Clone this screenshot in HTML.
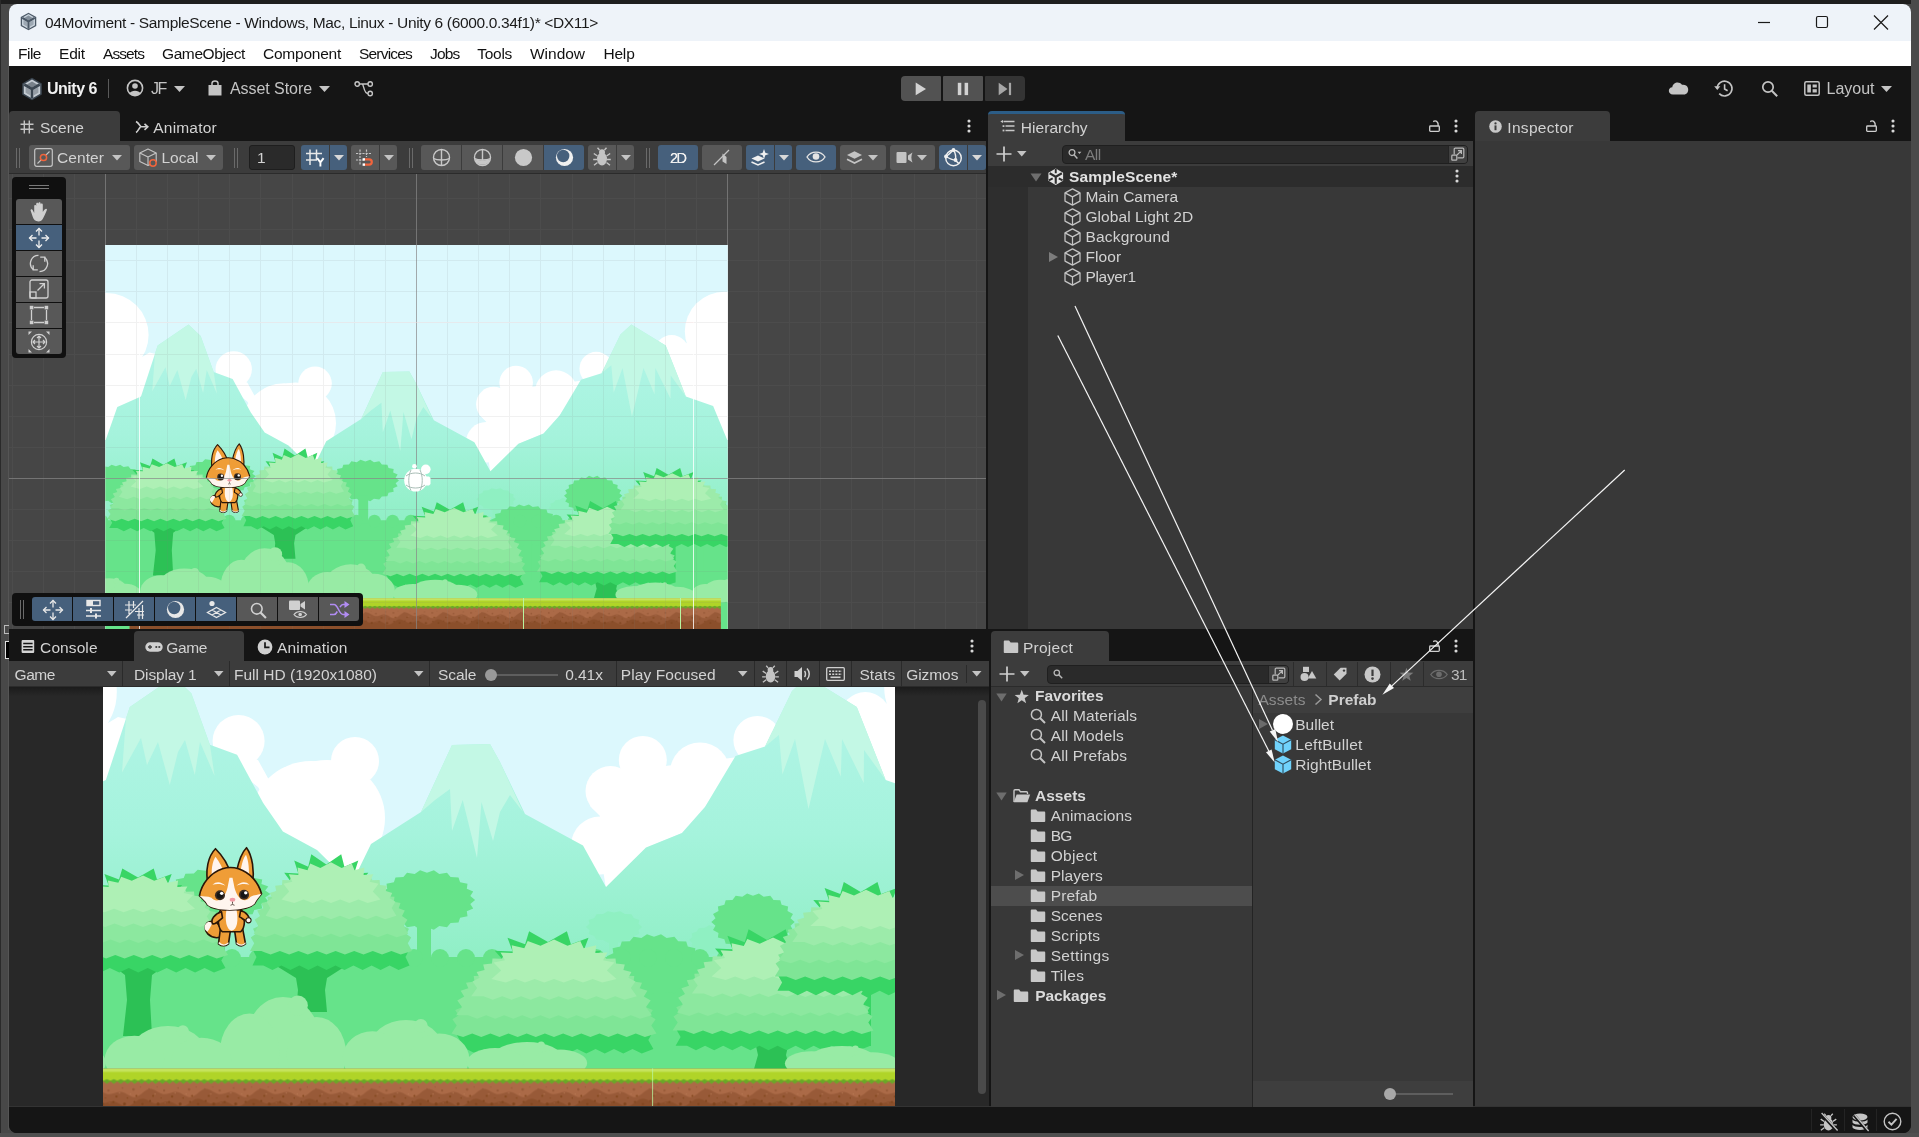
<!DOCTYPE html>
<html><head><meta charset="utf-8"><title>04Moviment - SampleScene - Unity 6</title>
<style>
html,body{margin:0;padding:0;background:#484848;overflow:hidden}
body{width:1919px;height:1137px;position:relative;font-family:"Liberation Sans",sans-serif;}
div,span.t,svg{position:absolute;box-sizing:border-box}
span.t{white-space:pre;}
svg{overflow:visible}
</style></head><body>
<div style="left:0px;top:0px;width:1919px;height:4px;background:#1e1e1e;"></div>
<div style="left:0px;top:0px;width:1px;height:1137px;background:#2a2a2a;"></div>
<div style="left:8px;top:40px;width:1px;height:1090px;background:#555;"></div>
<div style="left:4px;top:625px;width:5px;height:9px;border:1px solid #bbb;border-right:none;"></div>
<div style="left:5px;top:641px;width:5px;height:18px;background:#000;border:1px solid #e0e0e0;border-right:none;"></div>
<div style="left:1911px;top:66px;width:8px;height:12px;background:#2e2e2e;"></div>
<div style="left:1911px;top:203px;width:8px;height:18px;background:#2e2e2e;"></div>
<div style="left:1911px;top:335px;width:8px;height:18px;background:#2e2e2e;"></div>
<div style="left:1911px;top:0px;width:8px;height:1137px;background:#4a4a4a;"></div>
<div style="left:0px;top:1133px;width:1919px;height:4px;background:#4f4f4f;"></div>
<div id="win" style="left:9px;top:4px;width:1902px;height:1129px;border-radius:8px;overflow:hidden;will-change:transform;background:#151515">
<div style="left:-9px;top:-4px;width:1919px;height:1137px">
<div style="left:9px;top:4px;width:1902px;height:37px;background:#eef3f9;"></div>
<div style="left:9px;top:41px;width:1902px;height:25px;background:#ffffff;"></div>
<div style="left:9px;top:66px;width:1902px;height:1067px;background:#151515;"></div>
<div style="left:9px;top:111px;width:111px;height:30px;background:#3c3c3c;border-radius:4px 4px 0 0;"></div>
<div style="left:9px;top:141px;width:977px;height:33px;background:#3c3c3c;"></div>
<div style="left:9px;top:174px;width:977px;height:455px;background:#464646;overflow:hidden"><div style="left:-9px;top:-174px;width:1919px;height:1137px">
<svg style="left:105.3px;top:245px;overflow:hidden" width="622.4" height="384" viewBox="54.4 563.1 890.7 549.5"><defs><linearGradient id="mg" gradientUnits="userSpaceOnUse" x1="0" y1="680" x2="0" y2="990"><stop offset="0" stop-color="#b3f5e9"/><stop offset="0.5" stop-color="#a5f3dc"/><stop offset="1" stop-color="#8beec0"/></linearGradient><linearGradient id="dirt" gradientUnits="userSpaceOnUse" x1="0" y1="1084" x2="0" y2="1112"><stop offset="0" stop-color="#a9673f"/><stop offset="1" stop-color="#8a4f2c"/></linearGradient></defs><g id="art"><rect x="40" y="550" width="920" height="580" fill="#dcf8fd"/><g fill="#fff"><circle cx="56.8" cy="691.9" r="60"/><polygon points="54.0,700.0 108.0,723.0 118.0,717.0 127.0,719.0 130.0,730.0 130.0,845.0 54.0,845.0"/><circle cx="238.6" cy="741" r="26"/><circle cx="327" cy="818" r="58"/><circle cx="355" cy="761" r="24"/><polygon points="214.0,752.0 258.0,760.0 269.0,780.0 292.0,840.0 258.0,787.0"/><circle cx="311" cy="822" r="61"/><polygon points="275.0,818.0 379.0,818.0 379.0,850.0 353.0,887.0 350.0,887.0 317.0,850.0 283.0,833.0"/><circle cx="642.8" cy="760" r="24"/><circle cx="610.5" cy="791" r="25"/><circle cx="700" cy="772.5" r="30"/><circle cx="600" cy="845.5" r="29"/><polygon points="590.0,806.0 612.0,772.0 700.0,762.0 738.0,757.0 705.0,807.0 682.0,833.0 646.0,848.0 606.0,889.0 600.0,850.0 600.0,816.0"/><circle cx="757.4" cy="740" r="24"/><circle cx="941.2" cy="686.9" r="57"/><circle cx="865.3" cy="717" r="25"/><polygon points="862.0,705.0 948.0,700.0 948.0,845.0 862.0,845.0"/></g><polygon fill="url(#mg)" points="55.4,842.1 72.0,794.9 105.9,780.0 129.8,707.0 173.9,676.7 191.3,693.3 209.9,744.8 237.1,754.8 262.9,802.6 282.9,831.5 317.0,850.0 351.5,884.0 371.0,844.0 421.0,812.0 452.0,745.0 490.0,744.0 500.0,762.0 525.0,814.0 583.0,845.5 606.0,887.0 646.0,847.6 682.0,833.0 705.0,807.0 735.5,756.0 765.0,746.5 792.0,691.0 807.7,676.7 856.8,707.0 885.7,780.0 924.7,793.5 944.9,842.1 960.0,842.0 960.0,1000.0 40.0,1000.0 40.0,842.0"/><polygon fill="#c3f8e5" points="129.8,707.0 173.9,676.7 191.3,693.3 210.0,745.0 214.6,776.0 200.0,742.0 194.8,775.0 185.0,740.0 178.0,752.0 169.8,785.0 158.0,742.0 147.0,765.0 141.0,738.0 122.0,772.5 126.0,718.0"/><polygon fill="#c3f8e5" points="421.0,812.0 452.0,745.0 490.0,744.0 500.0,762.0 523.0,812.0 510.0,795.0 500.0,812.0 493.0,841.0 481.5,802.0 477.0,858.0 462.7,800.0 452.0,831.0 450.0,789.0 435.0,800.0"/><polygon fill="#c3f8e5" points="765.0,746.5 792.0,691.0 807.7,676.7 856.8,707.0 885.7,780.0 864.0,750.0 863.7,783.0 842.0,739.0 840.8,776.7 825.0,739.0 808.5,809.0 795.0,739.0 782.4,774.6 779.0,735.0"/><g fill="#8ff0c2"><polygon points="642.1,927.0 638.5,930.2 639.3,934.0 633.7,936.1 631.5,939.7 624.9,940.1 620.2,942.8 614.0,941.5 607.8,942.8 603.1,940.1 596.5,939.7 594.3,936.1 588.7,934.0 589.5,930.2 585.9,927.0 589.5,923.8 588.7,920.0 594.3,917.9 596.5,914.3 603.1,913.9 607.8,911.2 614.0,912.5 620.2,911.2 624.9,913.9 631.5,914.3 633.7,917.9 639.3,920.0 638.5,923.8"/><rect x="609" y="935" width="9" height="40"/><polygon points="740.9,940.0 737.6,943.0 738.4,946.6 733.2,948.4 731.2,951.8 725.1,952.2 720.8,954.7 715.0,953.6 709.2,954.7 704.9,952.2 698.8,951.8 696.8,948.4 691.6,946.6 692.4,943.0 689.1,940.0 692.4,937.0 691.6,933.4 696.8,931.6 698.8,928.2 704.9,927.8 709.2,925.3 715.0,926.4 720.8,925.3 725.1,927.8 731.2,928.2 733.2,931.6 738.4,933.4 737.6,937.0"/></g><g fill="#66e38a"><rect x="40" y="957" width="920" height="160"/><polygon points="270.4,894.0 265.2,897.5 268.3,901.5 261.4,904.1 262.2,908.5 254.3,909.9 252.6,914.2 244.2,914.4 240.3,918.3 232.1,917.3 226.3,920.5 219.0,918.3 211.7,920.5 205.9,917.3 197.7,918.3 193.8,914.4 185.4,914.2 183.7,909.9 175.8,908.5 176.6,904.1 169.7,901.5 172.8,897.5 167.6,894.0 172.8,890.5 169.7,886.5 176.6,883.9 175.8,879.5 183.7,878.1 185.4,873.8 193.8,873.6 197.7,869.7 205.9,870.7 211.7,867.5 219.0,869.7 226.3,867.5 232.1,870.7 240.3,869.7 244.2,873.6 252.6,873.8 254.3,878.1 262.2,879.5 261.4,883.9 268.3,886.5 265.2,890.5"/><polygon points="475.1,900.0 470.3,903.9 473.2,908.4 466.8,911.3 467.5,916.2 460.1,917.8 458.5,922.6 450.6,922.9 447.0,927.3 439.3,926.1 433.9,929.7 427.0,927.2 420.1,929.7 414.7,926.1 407.0,927.3 403.4,922.9 395.5,922.6 393.9,917.8 386.5,916.2 387.2,911.3 380.8,908.4 383.7,903.9 378.9,900.0 383.7,896.1 380.8,891.6 387.2,888.7 386.5,883.8 393.9,882.2 395.5,877.4 403.4,877.1 407.0,872.7 414.7,873.9 420.1,870.3 427.0,872.8 433.9,870.3 439.3,873.9 447.0,872.7 450.6,877.1 458.5,877.4 460.1,882.2 467.5,883.8 466.8,888.7 473.2,891.6 470.3,896.1"/><polygon points="703.2,965.0 698.3,969.0 701.2,973.7 694.7,976.7 695.4,981.8 687.8,983.5 686.2,988.5 678.2,988.7 674.4,993.2 666.6,992.0 661.0,995.7 654.0,993.2 647.0,995.7 641.4,992.0 633.6,993.2 629.8,988.7 621.8,988.5 620.2,983.5 612.6,981.8 613.3,976.7 606.8,973.7 609.7,969.0 604.8,965.0 609.7,961.0 606.8,956.3 613.3,953.3 612.6,948.2 620.2,946.5 621.8,941.5 629.8,941.3 633.6,936.8 641.4,938.0 647.0,934.3 654.0,936.8 661.0,934.3 666.6,938.0 674.4,936.8 678.2,941.3 686.2,941.5 687.8,946.5 695.4,948.2 694.7,953.3 701.2,956.3 698.3,961.0"/><polygon points="794.7,922.0 790.5,925.7 793.0,930.1 787.5,932.9 788.1,937.6 781.6,939.2 780.3,943.8 773.5,944.1 770.3,948.3 763.7,947.2 758.9,950.6 753.0,948.2 747.1,950.6 742.3,947.2 735.7,948.3 732.5,944.1 725.7,943.8 724.4,939.2 717.9,937.6 718.5,932.9 713.0,930.1 715.5,925.7 711.3,922.0 715.5,918.3 713.0,913.9 718.5,911.1 717.9,906.4 724.4,904.8 725.7,900.2 732.5,899.9 735.7,895.7 742.3,896.8 747.1,893.4 753.0,895.8 758.9,893.4 763.7,896.8 770.3,895.7 773.5,899.9 780.3,900.2 781.6,904.8 788.1,906.4 787.5,911.1 793.0,913.9 790.5,918.3"/><polygon points="112.8,905.0 108.5,908.6 111.1,912.8 105.4,915.5 106.0,920.0 99.4,921.5 98.0,926.0 91.0,926.3 87.8,930.3 81.0,929.2 76.1,932.5 70.0,930.3 63.9,932.5 59.0,929.2 52.2,930.3 49.0,926.3 42.0,926.0 40.6,921.5 34.0,920.0 34.6,915.5 28.9,912.8 31.5,908.6 27.2,905.0 31.5,901.4 28.9,897.2 34.6,894.5 34.0,890.0 40.6,888.5 42.0,884.0 49.0,883.7 52.2,879.7 59.0,880.8 63.9,877.5 70.0,879.7 76.1,877.5 81.0,880.8 87.8,879.7 91.0,883.7 98.0,884.0 99.4,888.5 106.0,890.0 105.4,894.5 111.1,897.2 108.5,901.4"/><polygon points="965.7,960.0 961.6,963.9 964.0,968.4 958.6,971.3 959.2,976.2 952.9,977.8 951.6,982.6 945.0,982.9 941.9,987.3 935.4,986.1 930.8,989.7 925.0,987.2 919.2,989.7 914.6,986.1 908.1,987.3 905.0,982.9 898.4,982.6 897.1,977.8 890.8,976.2 891.4,971.3 886.0,968.4 888.4,963.9 884.3,960.0 888.4,956.1 886.0,951.6 891.4,948.7 890.8,943.8 897.1,942.2 898.4,937.4 905.0,937.1 908.1,932.7 914.6,933.9 919.2,930.3 925.0,932.8 930.8,930.3 935.4,933.9 941.9,932.7 945.0,937.1 951.6,937.4 952.9,942.2 959.2,943.8 958.6,948.7 964.0,951.6 961.6,956.1"/><rect x="417" y="922" width="14" height="40"/><rect x="654" y="985" width="11" height="60"/><rect x="747" y="940" width="12" height="30"/><rect x="213" y="910" width="12" height="50"/><circle cx="50" cy="958" r="9"/><circle cx="76" cy="958" r="9"/><circle cx="102" cy="958" r="9"/><circle cx="128" cy="958" r="9"/><circle cx="154" cy="958" r="9"/><circle cx="180" cy="958" r="9"/><circle cx="206" cy="958" r="9"/><circle cx="232" cy="958" r="9"/><circle cx="258" cy="958" r="9"/><circle cx="284" cy="958" r="9"/><circle cx="310" cy="958" r="9"/><circle cx="336" cy="958" r="9"/><circle cx="362" cy="958" r="9"/><circle cx="388" cy="958" r="9"/><circle cx="414" cy="958" r="9"/><circle cx="440" cy="958" r="9"/><circle cx="466" cy="958" r="9"/><circle cx="492" cy="958" r="9"/><circle cx="518" cy="958" r="9"/><circle cx="544" cy="958" r="9"/><circle cx="570" cy="958" r="9"/><circle cx="596" cy="958" r="9"/><circle cx="622" cy="958" r="9"/><circle cx="648" cy="958" r="9"/><circle cx="674" cy="958" r="9"/><circle cx="700" cy="958" r="9"/><circle cx="726" cy="958" r="9"/><circle cx="752" cy="958" r="9"/><circle cx="778" cy="958" r="9"/><circle cx="804" cy="958" r="9"/><circle cx="830" cy="958" r="9"/><circle cx="856" cy="958" r="9"/><circle cx="882" cy="958" r="9"/><circle cx="908" cy="958" r="9"/><circle cx="934" cy="958" r="9"/></g><g fill="#2cc155"><polygon points="108.0,962.0 170.0,962.0 152.0,975.0 150.0,1000.0 152.0,1036.0 123.0,1036.0 127.0,1000.0 125.0,975.0"/><polygon points="270.0,962.0 352.0,962.0 327.0,978.0 325.0,990.0 327.0,1012.0 296.0,1012.0 298.0,990.0 296.0,978.0"/><polygon points="720.0,1036.0 824.0,1036.0 788.0,1046.0 786.0,1055.0 790.0,1069.0 754.0,1069.0 758.0,1055.0 756.0,1046.0"/><polygon points="520.0,1040.0 600.0,1040.0 572.0,1050.0 571.0,1060.0 553.0,1060.0 554.0,1050.0"/></g><rect x="850" y="960" width="26" height="86" fill="#38d565"/><rect x="871" y="982" width="40" height="87" fill="#66e38a" rx="8"/><polygon fill="#38d565" points="90.3,905.0 103.4,895.9 93.8,884.9 108.6,885.6 104.4,874.0 119.0,879.5 122.3,868.5 138.0,877.5 153.7,868.5 157.0,879.5 171.7,874.0 167.4,885.6 182.2,884.9 172.6,895.9 185.7,904.9 170.3,905.0 161.1,905.0 151.9,905.0 142.6,905.0 133.4,905.0 124.2,905.0 115.0,905.0 105.7,905.0"/><polygon fill="#38d565" points="60.5,968.1 64.7,960.4 61.4,954.7 66.5,951.0 64.2,946.0 70.0,943.5 68.8,938.8 75.3,937.2 75.2,932.8 82.3,932.1 83.5,927.9 91.0,927.9 93.6,924.1 101.5,924.8 105.7,921.4 114.1,922.7 120.4,919.7 130.1,921.7 143.0,919.2 155.9,921.7 165.6,919.7 171.9,922.7 180.3,921.4 184.5,924.8 192.4,924.1 195.0,927.9 202.5,927.9 203.7,932.1 210.8,932.8 210.7,937.2 217.2,938.8 216.0,943.5 221.8,946.0 219.5,951.0 224.6,954.7 221.3,960.4 225.5,968.1 214.0,972.6 204.6,968.1 195.1,972.6 185.6,968.1 176.2,972.6 166.7,968.1 157.2,972.6 147.7,968.1 138.3,972.6 128.8,968.1 119.3,972.6 109.8,968.1 100.4,972.6 90.9,968.1 81.4,972.6 72.0,968.1"/><polygon fill="#7fe596" points="57.9,955.0 62.3,948.2 58.7,943.0 63.7,939.7 61.0,935.1 66.7,932.9 64.9,928.6 71.1,927.1 70.3,923.0 76.9,922.3 77.2,918.4 84.2,918.2 85.6,914.5 92.9,915.0 95.6,911.5 103.2,912.5 107.3,909.4 115.4,910.9 121.4,908.1 130.7,910.1 143.0,907.6 155.3,910.1 164.6,908.1 170.6,910.9 178.7,909.4 182.8,912.5 190.4,911.5 193.1,915.0 200.4,914.5 201.8,918.2 208.8,918.4 209.1,922.3 215.7,923.0 214.9,927.1 221.1,928.6 219.3,932.9 225.0,935.1 222.3,939.7 227.3,943.0 223.7,948.2 228.1,955.0 216.8,958.5 207.6,955.0 198.3,958.5 189.1,955.0 179.9,958.5 170.7,955.0 161.4,958.5 152.2,955.0 143.0,958.5 133.8,955.0 124.6,958.5 115.3,955.0 106.1,958.5 96.9,955.0 87.7,958.5 78.4,955.0 69.2,958.5"/><polygon fill="#8ce89f" points="61.8,939.6 66.7,932.5 62.7,927.0 68.5,923.7 65.4,918.8 71.9,916.7 70.0,912.1 77.0,910.9 76.3,906.4 83.8,906.1 84.4,901.8 92.3,902.2 94.4,898.2 102.6,899.3 106.3,895.7 114.9,897.4 120.8,894.1 130.4,896.4 143.0,893.6 155.6,896.4 165.2,894.1 171.1,897.4 179.7,895.7 183.4,899.3 191.6,898.2 193.7,902.2 201.6,901.8 202.2,906.1 209.7,906.4 209.0,910.9 216.0,912.1 214.1,916.7 220.6,918.8 217.5,923.7 223.3,927.0 219.3,932.5 224.2,939.6 212.6,943.1 203.3,939.6 194.0,943.1 184.7,939.6 175.5,943.1 166.2,939.6 156.9,943.1 147.6,939.6 138.4,943.1 129.1,939.6 119.8,943.1 110.5,939.6 101.3,943.1 92.0,939.6 82.7,943.1 73.4,939.6"/><polygon fill="#9cebaa" points="74.3,923.4 79.2,916.4 75.4,911.0 81.3,907.8 78.7,903.0 85.4,901.2 84.3,896.5 91.6,895.8 92.0,891.4 99.8,891.7 101.9,887.6 110.1,888.7 114.2,885.0 123.0,886.9 130.1,883.7 143.0,886.3 155.9,883.7 163.0,886.9 171.8,885.0 175.9,888.7 184.1,887.6 186.2,891.7 194.0,891.4 194.4,895.8 201.7,896.5 200.6,901.2 207.3,903.0 204.7,907.8 210.6,911.0 206.8,916.4 211.7,923.4 199.9,926.9 190.4,923.4 180.9,926.9 171.5,923.4 162.0,926.9 152.5,923.4 143.0,926.9 133.5,923.4 124.0,926.9 114.5,923.4 105.1,926.9 95.6,923.4 86.1,926.9"/><polygon fill="#aef0b5" points="91.0,908.8 99.1,901.6 92.9,894.9 102.3,893.0 98.6,886.4 108.7,886.9 107.9,880.4 118.3,882.8 121.2,876.7 131.8,880.7 143.0,875.5 154.2,880.7 164.8,876.7 167.7,882.8 178.1,880.4 177.3,886.9 187.4,886.4 183.7,893.0 193.1,894.9 186.9,901.6 195.0,908.8 181.5,912.3 171.9,908.8 162.3,912.3 152.6,908.8 143.0,912.3 133.4,908.8 123.7,912.3 114.1,908.8 104.5,912.3"/><polygon fill="#38d565" points="280.8,895.1 293.3,885.0 284.2,872.7 298.3,873.5 294.2,860.5 308.2,866.7 311.3,854.3 326.3,864.4 341.2,854.3 344.4,866.7 358.3,860.5 354.2,873.5 368.3,872.7 359.2,885.0 371.7,895.1 355.9,895.1 346.0,895.1 336.1,895.1 326.3,895.1 316.4,895.1 306.5,895.1 296.6,895.1"/><polygon fill="#38d565" points="252.5,965.6 256.5,957.1 253.3,950.7 258.2,946.5 256.0,940.9 261.5,938.1 260.4,932.9 266.5,931.2 266.5,926.2 273.2,925.4 274.4,920.7 281.5,920.8 284.0,916.5 291.5,917.3 295.5,913.4 303.5,914.9 309.5,911.6 318.7,913.8 331.0,911.0 343.3,913.8 352.5,911.6 358.5,914.9 366.5,913.4 370.5,917.3 378.0,916.5 380.5,920.8 387.6,920.7 388.8,925.4 395.5,926.2 395.5,931.2 401.6,932.9 400.5,938.1 406.0,940.9 403.8,946.5 408.7,950.7 405.5,957.1 409.5,965.6 398.6,970.1 389.6,965.6 380.6,970.1 371.6,965.6 362.6,970.1 353.5,965.6 344.5,970.1 335.5,965.6 326.5,970.1 317.5,965.6 308.5,970.1 299.4,965.6 290.4,970.1 281.4,965.6 272.4,970.1 263.4,965.6"/><polygon fill="#7fe596" points="250.0,951.0 254.2,943.3 250.8,937.6 255.6,933.9 253.0,928.8 258.4,926.3 256.7,921.5 262.5,919.9 261.8,915.3 268.1,914.4 268.3,910.1 275.0,909.9 276.4,905.8 283.4,906.3 285.9,902.4 293.2,903.6 297.0,900.0 304.8,901.7 310.5,898.6 319.3,900.8 331.0,898.1 342.7,900.8 351.5,898.6 357.2,901.7 365.0,900.0 368.8,903.6 376.1,902.4 378.6,906.3 385.6,905.8 387.0,909.9 393.7,910.1 393.9,914.4 400.2,915.3 399.5,919.9 405.3,921.5 403.6,926.3 409.0,928.8 406.4,933.9 411.2,937.6 407.8,943.3 412.0,951.0 400.7,954.5 391.4,951.0 382.1,954.5 372.8,951.0 363.5,954.5 354.2,951.0 344.9,954.5 335.6,951.0 326.4,954.5 317.1,951.0 307.8,954.5 298.5,951.0 289.2,954.5 279.9,951.0 270.6,954.5 261.3,951.0"/><polygon fill="#8ce89f" points="253.7,933.8 258.4,925.8 254.6,919.7 260.0,916.0 257.2,910.6 263.3,908.2 261.5,903.0 268.2,901.7 267.5,896.8 274.7,896.4 275.3,891.6 282.8,892.1 284.7,887.6 292.5,888.8 296.1,884.7 304.2,886.6 309.8,883.0 319.0,885.6 331.0,882.4 343.0,885.6 352.2,883.0 357.8,886.6 365.9,884.7 369.5,888.8 377.3,887.6 379.2,892.1 386.7,891.6 387.3,896.4 394.5,896.8 393.8,901.7 400.5,903.0 398.7,908.2 404.8,910.6 402.0,916.0 407.4,919.7 403.6,925.8 408.3,933.8 396.7,937.3 387.3,933.8 377.9,937.3 368.5,933.8 359.1,937.3 349.8,933.8 340.4,937.3 331.0,933.8 321.6,937.3 312.2,933.8 302.9,937.3 293.5,933.8 284.1,937.3 274.7,933.8 265.3,937.3"/><polygon fill="#9cebaa" points="265.6,915.7 270.3,907.9 266.6,901.8 272.2,898.3 269.8,892.9 276.2,890.9 275.1,885.7 282.0,884.9 282.4,880.0 289.8,880.3 291.8,875.7 299.7,876.9 303.6,872.9 311.9,874.9 318.7,871.4 331.0,874.2 343.3,871.4 350.1,874.9 358.4,872.9 362.3,876.9 370.2,875.7 372.2,880.3 379.6,880.0 380.0,884.9 386.9,885.7 385.8,890.9 392.2,892.9 389.8,898.3 395.4,901.8 391.7,907.9 396.4,915.7 385.2,919.2 376.1,915.7 367.1,919.2 358.1,915.7 349.1,919.2 340.0,915.7 331.0,919.2 322.0,915.7 312.9,919.2 303.9,915.7 294.9,919.2 285.9,915.7 276.8,919.2"/><polygon fill="#aef0b5" points="281.5,899.4 289.2,891.4 283.3,883.8 292.3,881.8 288.7,874.3 298.4,874.9 297.6,867.6 307.5,870.3 310.2,863.6 320.3,868.0 331.0,862.2 341.7,868.0 351.8,863.6 354.5,870.3 364.4,867.6 363.6,874.9 373.3,874.3 369.7,881.8 378.7,883.8 372.8,891.4 380.5,899.4 367.7,902.9 358.5,899.4 349.3,902.9 340.2,899.4 331.0,902.9 321.8,899.4 312.7,902.9 303.5,899.4 294.3,902.9"/><polygon fill="#38d565" points="490.5,974.4 506.3,963.7 494.8,950.7 512.6,951.4 507.5,937.7 525.1,944.3 529.1,931.2 548.0,941.9 566.9,931.2 570.9,944.3 588.5,937.7 583.4,951.4 601.2,950.7 589.7,963.7 605.5,974.3 588.9,974.4 579.8,974.4 570.7,974.4 561.6,974.4 552.5,974.4 543.5,974.4 534.4,974.4 525.3,974.4 516.2,974.4 507.1,974.4"/><polygon fill="#38d565" points="454.6,1049.0 459.7,1039.9 455.7,1033.1 461.8,1028.7 459.0,1022.8 466.1,1019.9 464.6,1014.3 472.4,1012.5 472.4,1007.3 480.8,1006.4 482.3,1001.5 491.3,1001.5 494.5,997.0 504.0,997.8 509.1,993.7 519.2,995.4 526.8,991.8 538.5,994.1 554.0,991.1 569.5,994.1 581.2,991.8 588.8,995.4 598.9,993.7 604.0,997.8 613.5,997.0 616.7,1001.5 625.7,1001.5 627.2,1006.4 635.6,1007.3 635.6,1012.5 643.4,1014.3 641.9,1019.9 649.0,1022.8 646.2,1028.7 652.3,1033.1 648.3,1039.9 653.4,1049.0 641.8,1053.5 632.5,1049.0 623.3,1053.5 614.0,1049.0 604.8,1053.5 595.6,1049.0 586.3,1053.5 577.1,1049.0 567.9,1053.5 558.6,1049.0 549.4,1053.5 540.1,1049.0 530.9,1053.5 521.7,1049.0 512.4,1053.5 503.2,1049.0 494.0,1053.5 484.7,1049.0 475.5,1053.5 466.2,1049.0"/><polygon fill="#7fe596" points="451.5,1033.5 456.7,1025.4 452.4,1019.3 458.5,1015.4 455.2,1010.0 462.0,1007.3 459.9,1002.3 467.3,1000.6 466.4,995.7 474.4,994.8 474.7,990.2 483.2,990.0 484.8,985.7 493.7,986.2 496.9,982.1 506.1,983.3 511.0,979.6 520.8,981.4 528.0,978.0 539.2,980.4 554.0,977.5 568.8,980.4 580.0,978.0 587.2,981.4 597.0,979.6 601.9,983.3 611.1,982.1 614.3,986.2 623.2,985.7 624.8,990.0 633.3,990.2 633.6,994.8 641.6,995.7 640.7,1000.6 648.1,1002.3 646.0,1007.3 652.8,1010.0 649.5,1015.4 655.6,1019.3 651.3,1025.4 656.5,1033.5 644.9,1037.0 635.8,1033.5 626.7,1037.0 617.6,1033.5 608.5,1037.0 599.5,1033.5 590.4,1037.0 581.3,1033.5 572.2,1037.0 563.1,1033.5 554.0,1037.0 544.9,1033.5 535.8,1037.0 526.7,1033.5 517.6,1037.0 508.5,1033.5 499.5,1037.0 490.4,1033.5 481.3,1037.0 472.2,1033.5 463.1,1037.0"/><polygon fill="#8ce89f" points="456.1,1015.3 462.1,1006.9 457.3,1000.4 464.2,996.5 460.6,990.7 468.3,988.2 466.0,982.8 474.5,981.4 473.7,976.1 482.7,975.7 483.4,970.7 492.9,971.1 495.4,966.4 505.3,967.7 509.8,963.4 520.1,965.4 527.2,961.5 538.9,964.2 554.0,960.9 569.1,964.2 580.8,961.5 587.9,965.4 598.2,963.4 602.7,967.7 612.6,966.4 615.1,971.1 624.6,970.7 625.3,975.7 634.3,976.1 633.5,981.4 642.0,982.8 639.7,988.2 647.4,990.7 643.8,996.5 650.7,1000.4 645.9,1006.9 651.9,1015.3 640.0,1018.8 630.9,1015.3 621.9,1018.8 612.8,1015.3 603.8,1018.8 594.7,1015.3 585.7,1018.8 576.6,1015.3 567.6,1018.8 558.5,1015.3 549.5,1018.8 540.4,1015.3 531.4,1018.8 522.3,1015.3 513.3,1018.8 504.2,1015.3 495.2,1018.8 486.1,1015.3 477.1,1018.8 468.0,1015.3"/><polygon fill="#9cebaa" points="471.2,996.2 477.1,987.9 472.5,981.5 479.6,977.8 476.6,972.0 484.6,969.9 483.2,964.4 492.0,963.6 492.5,958.4 501.9,958.7 504.4,953.9 514.3,955.1 519.3,950.8 529.9,953.0 538.4,949.3 554.0,952.3 569.6,949.3 578.1,953.0 588.7,950.8 593.7,955.1 603.6,953.9 606.1,958.7 615.5,958.4 616.0,963.6 624.8,964.4 623.4,969.9 631.4,972.0 628.4,977.8 635.5,981.5 630.9,987.9 636.8,996.2 624.6,999.7 615.2,996.2 605.8,999.7 596.4,996.2 586.9,999.7 577.5,996.2 568.1,999.7 558.7,996.2 549.3,999.7 539.9,996.2 530.5,999.7 521.1,996.2 511.6,999.7 502.2,996.2 492.8,999.7 483.4,996.2"/><polygon fill="#aef0b5" points="491.4,978.9 501.1,970.4 493.6,962.4 505.0,960.2 500.5,952.4 512.7,953.0 511.7,945.3 524.3,948.2 527.7,941.0 540.5,945.7 554.0,939.6 567.5,945.7 580.3,941.0 583.7,948.2 596.3,945.3 595.3,953.0 607.5,952.4 603.0,960.2 614.4,962.4 606.9,970.4 616.6,978.9 602.3,982.4 592.7,978.9 583.0,982.4 573.3,978.9 563.7,982.4 554.0,978.9 544.3,982.4 534.7,978.9 525.0,982.4 515.3,978.9 505.7,982.4"/><polygon fill="#38d565" points="710.8,972.0 726.2,961.4 715.0,948.6 732.4,949.3 727.4,935.8 744.7,942.3 748.6,929.3 767.1,939.9 785.7,929.3 789.6,942.3 806.8,935.8 801.8,949.3 819.3,948.6 808.0,961.4 823.5,972.0 806.3,972.0 796.5,972.0 786.7,972.0 776.9,972.0 767.1,972.0 757.3,972.0 747.5,972.0 737.7,972.0 727.9,972.0"/><polygon fill="#38d565" points="675.6,1045.8 680.6,1036.9 676.7,1030.1 682.7,1025.8 679.9,1019.9 686.8,1017.0 685.4,1011.6 693.0,1009.7 693.0,1004.6 701.3,1003.7 702.7,998.8 711.6,998.9 714.7,994.4 724.0,995.2 729.0,991.2 738.9,992.8 746.3,989.2 757.8,991.5 773.0,988.6 788.2,991.5 799.7,989.2 807.1,992.8 817.0,991.2 822.0,995.2 831.3,994.4 834.4,998.9 843.3,998.8 844.7,1003.7 853.0,1004.6 853.0,1009.7 860.6,1011.6 859.2,1017.0 866.1,1019.9 863.3,1025.8 869.3,1030.1 865.4,1036.9 870.4,1045.8 859.0,1050.3 850.0,1045.8 840.9,1050.3 831.8,1045.8 822.8,1050.3 813.7,1045.8 804.7,1050.3 795.6,1045.8 786.6,1050.3 777.5,1045.8 768.5,1050.3 759.4,1045.8 750.4,1050.3 741.3,1045.8 732.3,1050.3 723.2,1045.8 714.2,1050.3 705.1,1045.8 696.0,1050.3 687.0,1045.8"/><polygon fill="#7fe596" points="672.5,1030.5 677.7,1022.5 673.5,1016.5 679.4,1012.6 676.2,1007.3 682.9,1004.6 680.8,999.6 688.1,997.9 687.1,993.1 695.0,992.2 695.3,987.7 703.6,987.5 705.2,983.2 713.9,983.7 717.0,979.7 726.1,980.8 730.9,977.2 740.4,978.9 747.5,975.7 758.5,978.0 773.0,975.1 787.5,978.0 798.5,975.7 805.6,978.9 815.1,977.2 819.9,980.8 829.0,979.7 832.1,983.7 840.8,983.2 842.4,987.5 850.7,987.7 851.0,992.2 858.9,993.1 857.9,997.9 865.2,999.6 863.1,1004.6 869.8,1007.3 866.6,1012.6 872.5,1016.5 868.3,1022.5 873.5,1030.5 861.7,1034.0 852.3,1030.5 843.0,1034.0 833.7,1030.5 824.3,1034.0 815.0,1030.5 805.7,1034.0 796.3,1030.5 787.0,1034.0 777.7,1030.5 768.3,1034.0 759.0,1030.5 749.7,1034.0 740.3,1030.5 731.0,1034.0 721.7,1030.5 712.3,1034.0 703.0,1030.5 693.7,1034.0 684.3,1030.5"/><polygon fill="#8ce89f" points="677.1,1012.5 682.9,1004.2 678.2,997.8 685.0,993.9 681.4,988.2 689.0,985.7 686.8,980.3 695.1,978.9 694.3,973.7 703.1,973.3 703.9,968.4 713.1,968.8 715.6,964.2 725.3,965.4 729.7,961.2 739.8,963.1 746.7,959.3 758.2,962.0 773.0,958.7 787.8,962.0 799.3,959.3 806.2,963.1 816.3,961.2 820.7,965.4 830.4,964.2 832.9,968.8 842.1,968.4 842.9,973.3 851.7,973.7 850.9,978.9 859.2,980.3 857.0,985.7 864.6,988.2 861.0,993.9 867.8,997.8 863.1,1004.2 868.9,1012.5 856.8,1016.0 847.5,1012.5 838.2,1016.0 828.9,1012.5 819.6,1016.0 810.2,1012.5 800.9,1016.0 791.6,1012.5 782.3,1016.0 773.0,1012.5 763.7,1016.0 754.4,1012.5 745.1,1016.0 735.8,1012.5 726.5,1016.0 717.1,1012.5 707.8,1016.0 698.5,1012.5 689.2,1016.0"/><polygon fill="#9cebaa" points="691.9,993.6 697.7,985.4 693.2,979.0 700.1,975.4 697.1,969.7 705.0,967.6 703.6,962.2 712.3,961.3 712.7,956.2 721.9,956.5 724.4,951.7 734.1,953.0 739.0,948.7 749.3,950.9 757.7,947.2 773.0,950.2 788.3,947.2 796.7,950.9 807.0,948.7 811.9,953.0 821.6,951.7 824.1,956.5 833.3,956.2 833.7,961.3 842.4,962.2 841.0,967.6 848.9,969.7 845.9,975.4 852.8,979.0 848.3,985.4 854.1,993.6 842.2,997.1 833.0,993.6 823.7,997.1 814.5,993.6 805.3,997.1 796.1,993.6 786.8,997.1 777.6,993.6 768.4,997.1 759.2,993.6 749.9,997.1 740.7,993.6 731.5,997.1 722.3,993.6 713.0,997.1 703.8,993.6"/><polygon fill="#aef0b5" points="711.6,976.5 721.2,968.1 713.9,960.2 725.0,958.0 720.5,950.3 732.5,950.9 731.6,943.3 743.8,946.1 747.3,939.0 759.7,943.7 773.0,937.6 786.3,943.7 798.7,939.0 802.2,946.1 814.4,943.3 813.5,950.9 825.5,950.3 821.0,958.0 832.1,960.2 824.8,968.1 834.4,976.5 820.4,980.0 810.9,976.5 801.4,980.0 791.9,976.5 782.5,980.0 773.0,976.5 763.5,980.0 754.1,976.5 744.6,980.0 735.1,976.5 725.6,980.0"/><polygon fill="#38d565" points="809.5,921.9 823.5,912.0 813.3,900.0 829.1,900.8 824.6,888.1 840.3,894.1 843.8,882.1 860.7,891.9 877.5,882.1 881.1,894.1 896.7,888.1 892.2,900.8 908.0,900.0 897.8,912.0 911.8,921.9 895.3,921.9 885.4,921.9 875.5,921.9 865.6,921.9 855.7,921.9 845.8,921.9 835.9,921.9 826.0,921.9"/><polygon fill="#38d565" points="777.5,990.8 782.1,982.4 778.5,976.2 784.0,972.1 781.5,966.6 787.7,963.9 786.4,958.8 793.4,957.1 793.4,952.3 800.9,951.5 802.2,947.0 810.2,947.0 813.0,942.8 821.5,943.6 826.0,939.8 835.0,941.3 841.8,938.0 852.2,940.1 866.0,937.4 879.8,940.1 890.2,938.0 897.0,941.3 906.0,939.8 910.5,943.6 919.0,942.8 921.8,947.0 929.8,947.0 931.1,951.5 938.6,952.3 938.6,957.1 945.6,958.8 944.3,963.9 950.5,966.6 948.0,972.1 953.5,976.2 949.9,982.4 954.5,990.8 943.2,995.3 934.2,990.8 925.1,995.3 916.0,990.8 906.9,995.3 897.8,990.8 888.7,995.3 879.6,990.8 870.5,995.3 861.5,990.8 852.4,995.3 843.3,990.8 834.2,995.3 825.1,990.8 816.0,995.3 806.9,990.8 797.8,995.3 788.8,990.8"/><polygon fill="#7fe596" points="774.8,976.5 779.4,969.0 775.6,963.4 781.0,959.8 778.1,954.8 784.2,952.4 782.2,947.7 788.9,946.1 788.0,941.6 795.1,940.8 795.4,936.5 803.0,936.4 804.4,932.3 812.3,932.8 815.1,929.1 823.4,930.2 827.7,926.7 836.4,928.4 842.9,925.3 852.8,927.5 866.0,924.8 879.2,927.5 889.1,925.3 895.6,928.4 904.3,926.7 908.6,930.2 916.9,929.1 919.7,932.8 927.6,932.3 929.0,936.4 936.6,936.5 936.9,940.8 944.0,941.6 943.1,946.1 949.8,947.7 947.8,952.4 953.9,954.8 951.0,959.8 956.4,963.4 952.6,969.0 957.2,976.5 945.6,980.0 936.3,976.5 926.9,980.0 917.5,976.5 908.2,980.0 898.8,976.5 889.4,980.0 880.1,976.5 870.7,980.0 861.3,976.5 851.9,980.0 842.6,976.5 833.2,980.0 823.8,976.5 814.5,980.0 805.1,976.5 795.7,980.0 786.4,976.5"/><polygon fill="#8ce89f" points="778.9,959.7 784.2,951.9 779.9,946.0 786.1,942.3 782.8,937.0 789.7,934.7 787.7,929.7 795.2,928.4 794.5,923.5 802.5,923.1 803.2,918.5 811.6,918.9 813.9,914.6 822.6,915.8 826.6,911.8 835.8,913.6 842.2,910.1 852.5,912.6 866.0,909.5 879.5,912.6 889.8,910.1 896.2,913.6 905.4,911.8 909.4,915.8 918.1,914.6 920.4,918.9 928.8,918.5 929.5,923.1 937.5,923.5 936.8,928.4 944.3,929.7 942.3,934.7 949.2,937.0 945.9,942.3 952.1,946.0 947.8,951.9 953.1,959.7 941.2,963.2 931.8,959.7 922.4,963.2 913.0,959.7 903.6,963.2 894.2,959.7 884.8,963.2 875.4,959.7 866.0,963.2 856.6,959.7 847.2,963.2 837.8,959.7 828.4,963.2 819.0,959.7 809.6,963.2 800.2,959.7 790.8,963.2"/><polygon fill="#9cebaa" points="792.3,942.1 797.6,934.4 793.5,928.5 799.8,925.1 797.1,919.7 804.2,917.8 803.0,912.7 810.8,912.0 811.3,907.2 819.6,907.4 821.9,903.0 830.7,904.2 835.1,900.2 844.5,902.2 852.1,898.8 866.0,901.5 879.9,898.8 887.5,902.2 896.9,900.2 901.3,904.2 910.1,903.0 912.4,907.4 920.7,907.2 921.2,912.0 929.0,912.7 927.8,917.8 934.9,919.7 932.2,925.1 938.5,928.5 934.4,934.4 939.7,942.1 927.7,945.6 918.2,942.1 908.7,945.6 899.2,942.1 889.7,945.6 880.2,942.1 870.7,945.6 861.3,942.1 851.8,945.6 842.3,942.1 832.8,945.6 823.3,942.1 813.8,945.6 804.3,942.1"/><polygon fill="#aef0b5" points="810.3,926.1 818.9,918.3 812.3,910.9 822.4,908.9 818.3,901.6 829.3,902.2 828.4,895.1 839.5,897.7 842.6,891.1 854.0,895.5 866.0,889.8 878.0,895.5 889.4,891.1 892.5,897.7 903.6,895.1 902.7,902.2 913.7,901.6 909.6,908.9 919.7,910.9 913.1,918.3 921.7,926.1 908.2,929.6 898.8,926.1 889.5,929.6 880.1,926.1 870.7,929.6 861.3,926.1 851.9,929.6 842.5,926.1 833.2,929.6 823.8,926.1"/><g fill="#98eba5"><ellipse cx="283" cy="1041.268" rx="37.199999999999996" ry="44.26800000000006"/><ellipse cx="249.51999999999998" cy="1052.692" rx="29.759999999999998" ry="39.27000000000005"/><ellipse cx="316.48" cy="1054.1200000000001" rx="29.759999999999998" ry="37.12800000000005"/><circle cx="297.88" cy="1005.568" r="9.996000000000013"/></g><g fill="#98eba5"><ellipse cx="168" cy="1052.288" rx="37.199999999999996" ry="26.288000000000057"/><ellipse cx="134.51999999999998" cy="1059.0720000000001" rx="29.759999999999998" ry="23.320000000000054"/><ellipse cx="201.48000000000002" cy="1059.92" rx="29.759999999999998" ry="22.048000000000048"/><circle cx="182.88" cy="1031.088" r="5.936000000000013"/></g><g fill="#98eba5"><ellipse cx="406" cy="1050.008" rx="37.199999999999996" ry="30.008000000000056"/><ellipse cx="372.52" cy="1057.7520000000002" rx="29.759999999999998" ry="26.62000000000005"/><ellipse cx="439.48" cy="1058.72" rx="29.759999999999998" ry="25.16800000000005"/><circle cx="420.88" cy="1025.808" r="6.776000000000013"/></g><g fill="#98eba5"><ellipse cx="527" cy="1058.3680000000002" rx="35.4" ry="16.368000000000055"/><ellipse cx="495.14" cy="1062.592" rx="28.32" ry="14.520000000000051"/><ellipse cx="558.86" cy="1063.1200000000001" rx="28.32" ry="13.728000000000048"/><circle cx="541.16" cy="1045.1680000000001" r="3.696000000000013"/></g><g fill="#98eba5"><ellipse cx="842" cy="1059.8880000000001" rx="33.6" ry="13.888000000000057"/><ellipse cx="811.76" cy="1063.472" rx="26.88" ry="12.320000000000052"/><ellipse cx="872.24" cy="1063.92" rx="26.88" ry="11.648000000000048"/><circle cx="855.44" cy="1048.688" r="3.136000000000013"/></g><g fill="#98eba5"><ellipse cx="60" cy="1057.608" rx="27.0" ry="17.608000000000057"/><ellipse cx="35.7" cy="1062.152" rx="21.599999999999998" ry="15.62000000000005"/><ellipse cx="84.3" cy="1062.72" rx="21.599999999999998" ry="14.768000000000049"/><circle cx="70.8" cy="1043.408" r="3.9760000000000133"/></g><g fill="#98eba5"><ellipse cx="935" cy="1058.3680000000002" rx="24.0" ry="16.368000000000055"/><ellipse cx="913.4" cy="1062.592" rx="19.2" ry="14.520000000000051"/><ellipse cx="956.6" cy="1063.1200000000001" rx="19.2" ry="13.728000000000048"/><circle cx="944.6" cy="1045.1680000000001" r="3.696000000000013"/></g><defs><pattern id="gt" patternUnits="userSpaceOnUse" x="89.5" y="1068.4" width="55.6" height="48" viewBox="0 1068.4 55.6 48"><rect x="0" y="1079" width="55.6" height="36" fill="#ab6a47"/><polygon fill="#985a38" points="0.0,1090.9 2.0,1089.7 4.0,1089.0 6.0,1088.9 7.9,1089.3 9.9,1090.2 11.9,1091.3 13.9,1092.5 15.9,1093.5 17.9,1094.1 19.9,1094.2 21.8,1094.0 23.8,1093.5 25.8,1092.8 27.8,1092.1 29.8,1091.8 31.8,1091.8 33.8,1092.3 35.7,1093.2 37.7,1094.3 39.7,1095.5 41.7,1096.5 43.7,1097.1 45.7,1097.1 47.7,1096.6 49.6,1095.5 51.6,1094.1 53.6,1092.5 55.6,1090.9 55.6,1116.0 0.0,1116.0"/><polygon fill="#8b4f2b" points="0.0,1099.1 2.0,1099.9 4.0,1101.0 6.0,1102.0 7.9,1102.9 9.9,1103.5 11.9,1103.7 13.9,1103.4 15.9,1102.9 17.9,1102.3 19.9,1101.7 21.8,1101.4 23.8,1101.4 25.8,1101.9 27.8,1102.7 29.8,1103.7 31.8,1104.8 33.8,1105.7 35.7,1106.2 37.7,1106.3 39.7,1105.8 41.7,1104.8 43.7,1103.5 45.7,1102.0 47.7,1100.6 49.6,1099.4 51.6,1098.8 53.6,1098.7 55.6,1099.1 55.6,1116.0 0.0,1116.0"/><circle cx="4" cy="1089" r="0.9" fill="#985a38"/><circle cx="12" cy="1087" r="0.6" fill="#985a38"/><circle cx="19" cy="1090.5" r="1.2" fill="#985a38"/><circle cx="33" cy="1088" r="0.8" fill="#985a38"/><circle cx="44" cy="1089.5" r="1.3" fill="#985a38"/><circle cx="51" cy="1087" r="0.6" fill="#985a38"/><circle cx="8" cy="1096" r="1.0" fill="#84491f"/><circle cx="16" cy="1098" r="0.7" fill="#84491f"/><circle cx="27" cy="1096.5" r="1.2" fill="#84491f"/><circle cx="38" cy="1098" r="0.8" fill="#84491f"/><circle cx="47" cy="1096" r="1.0" fill="#84491f"/><circle cx="5" cy="1101" r="1.0" fill="#7f451e"/><circle cx="13" cy="1104" r="1.6" fill="#7f451e"/><circle cx="24" cy="1102" r="1.1" fill="#7f451e"/><circle cx="35" cy="1104" r="1.5" fill="#7f451e"/><circle cx="45" cy="1102" r="1.0" fill="#7f451e"/><circle cx="53" cy="1104" r="1.2" fill="#7f451e"/><circle cx="10" cy="1094" r="0.6" fill="#b97a55"/><circle cx="30" cy="1093" r="0.6" fill="#b97a55"/><circle cx="41" cy="1094" r="0.6" fill="#b97a55"/><circle cx="20" cy="1103" r="0.6" fill="#a06040"/><polygon fill="#6aa827" points="0.0,1078.5 0.0,1081.4 3.5,1083.9 7.0,1081.4 10.4,1083.9 13.9,1081.4 17.4,1083.9 20.9,1081.4 24.3,1083.9 27.8,1081.4 31.3,1083.9 34.8,1081.4 38.2,1083.9 41.7,1081.4 45.2,1083.9 48.6,1081.4 52.1,1083.9 55.6,1081.4 55.6,1078.5"/><polygon fill="#b0d428" points="0.0,1068.4 55.6,1068.4 55.6,1080.6 52.1,1079.2 48.6,1080.6 45.2,1079.2 41.7,1080.6 38.2,1079.2 34.8,1080.6 31.3,1079.2 27.8,1080.6 24.3,1079.2 20.9,1080.6 17.4,1079.2 13.9,1080.6 10.4,1079.2 7.0,1080.6 3.5,1079.2 0.0,1080.6"/><rect x="0" y="1068.4" width="55.6" height="3.5" fill="#c5e35c"/></pattern></defs><rect x="89.5" y="1068.4" width="846.3" height="46" fill="url(#gt)"/></g><g transform="translate(198.47,847.70) scale(1.0010)" stroke="#2a1608" stroke-width="1.6" stroke-linejoin="round"><path d="M18,74 C4,70 2,88 18,90 C24,90 26,84 22,80Z" fill="#ef9d37"/><path d="M10,74 C5,76 5,82 9,84 C12,80 13,77 14,75Z" fill="#fff5ee" stroke="none"/><path d="M22,80 L20,96 Q25,100 30,96 L32,82Z" fill="#ef9d37"/><path d="M36,82 L38,96 Q43,100 47,96 L44,80Z" fill="#ef9d37"/><path d="M20.5,94 Q25,99 30,94.5 L30,96 Q25,100 20,96Z" fill="#fff5ee" stroke="none"/><path d="M38,94.5 Q43,99 47,94.5 L47,96 Q43,100 38,96Z" fill="#fff5ee" stroke="none"/><path d="M22,62 C18,70 20,82 24,84 L42,84 C47,80 47,70 43,62Z" fill="#ef9d37"/><path d="M28,62 C26,72 28,82 33,83 C39,82 40,72 38,62Z" fill="#fff5ee" stroke="none"/><path d="M23,64 C16,66 12,72 14,76 C17,77 19,74 24,70Z" fill="#ef9d37"/><path d="M42,63 C48,64 52,70 50,73 C46,74 45,71 41,69Z" fill="#ef9d37"/><circle cx="50" cy="72.5" r="2.6" fill="#fff5ee" stroke-width="1"/><path d="M10,40 C6,22 10,8 17,1 C24,8 30,18 32,26Z" fill="#ef9d37"/><path d="M38,24 C40,14 44,4 48,0 C54,8 56,24 54,36Z" fill="#ef9d37"/><path d="M14,34 C12,22 14,14 17,9 C21,14 24,20 26,26Z" fill="#fff5ee" stroke="none"/><path d="M42,24 C43,16 45,10 47.5,7 C50,13 51,22 50,30Z" fill="#fff5ee" stroke="none"/><path d="M1,48 C3,36 12,25 24,21 C29,19.5 35,19.5 40,21 C52,25 60,35 63,46 C60,50 58,52 56,56 C48,64 16,64 9,57 C7,53 4,51 1,48Z" fill="#ef9d37"/><path d="M1,48 C5,49 9,48 13,50 C18,56 26,52 29,40 L31,30 L34,30 L36,40 C39,52 47,56 52,49 C56,47 60,47 63,46 C60,50 58,52 56,56 C48,64 16,64 9,57 C7,53 4,51 1,48Z" fill="#fff5ee" stroke="none"/><path d="M14,37 C18,33 23,34 27,38 C23,36 18,36 14,37Z" fill="#fff5ee" stroke="none"/><path d="M38,38 C42,34 47,33 51,37 C47,36 42,36 38,38Z" fill="#fff5ee" stroke="none"/><circle cx="21.5" cy="47.5" r="5" fill="#3a2a20" stroke="none"/><circle cx="45.5" cy="47" r="5" fill="#3a2a20" stroke="none"/><circle cx="21.5" cy="47.5" r="3.2" fill="#151515" stroke="none"/><circle cx="45.5" cy="47" r="3.2" fill="#151515" stroke="none"/><circle cx="23.2" cy="45.6" r="1.7" fill="#fff" stroke="none"/><circle cx="47.2" cy="45.1" r="1.7" fill="#fff" stroke="none"/><ellipse cx="34" cy="52" rx="2.8" ry="1.9" fill="#f29aa4" stroke="none"/><path d="M34,54V56M32,57.5Q34,56 36,57.5" stroke="#3a2a20" stroke-width="0.8" fill="none"/></g></svg>
<svg style="left:0;top:0" width="1000" height="640"><path d="M12.5,174V629M43.5,174V629M74.5,174V629M105.5,174V629M136.5,174V629M167.5,174V629M198.5,174V629M229.5,174V629M260.5,174V629M292.5,174V629M323.5,174V629M354.5,174V629M385.5,174V629M447.5,174V629M478.5,174V629M509.5,174V629M540.5,174V629M572.5,174V629M603.5,174V629M634.5,174V629M665.5,174V629M696.5,174V629M727.5,174V629M758.5,174V629M789.5,174V629M820.5,174V629M851.5,174V629M882.5,174V629M914.5,174V629M945.5,174V629M976.5,174V629M9,198.5H986M9,229.5H986M9,260.5H986M9,291.5H986M9,322.5H986M9,354.5H986M9,385.5H986M9,416.5H986M9,447.5H986M9,509.5H986M9,540.5H986M9,571.5H986M9,602.5H986" stroke="rgba(128,128,128,0.11)" stroke-width="1" fill="none" shape-rendering="crispEdges"/><path d="M416.5,174V629M9,478.5H986" stroke="rgba(135,135,135,0.7)" stroke-width="1" fill="none" shape-rendering="crispEdges"/><path d="M139.5,322V629M693.5,322V629" stroke="rgba(255,255,255,0.8)" stroke-width="1" fill="none" shape-rendering="crispEdges"/><path d="M139,322.5H694" stroke="rgba(255,235,235,0.45)" stroke-width="1" fill="none" shape-rendering="crispEdges"/><path d="M105.5,174V629M727.5,174V629" stroke="rgba(255,255,255,0.22)" stroke-width="1" fill="none" shape-rendering="crispEdges"/><path d="M523.5,598V629M680.5,598V629" stroke="#b8f5a0" stroke-width="1" fill="none" shape-rendering="crispEdges"/></svg>
</div></div>
<div style="left:988px;top:111px;width:137px;height:30px;background:#3c3c3c;border-radius:4px 4px 0 0;border-top:3px solid #2c5d87;"></div>
<div style="left:988px;top:141px;width:485px;height:25px;background:#3c3c3c;"></div>
<div style="left:988px;top:166px;width:485px;height:463px;background:#383838;"></div>
<div style="left:1475px;top:111px;width:135px;height:30px;background:#3c3c3c;border-radius:4px 4px 0 0;"></div>
<div style="left:1475px;top:141px;width:436px;height:966px;background:#383838;"></div>
<div style="left:134px;top:631px;width:110px;height:30px;background:#3c3c3c;border-radius:4px 4px 0 0;"></div>
<div style="left:9px;top:661px;width:980px;height:26px;background:#3c3c3c;"></div>
<div style="left:9px;top:687px;width:980px;height:420px;background:#282828;"></div>
<div style="left:9px;top:687px;width:980px;height:9px;background:linear-gradient(#1b1b1b,#282828);"></div>
<svg style="left:103px;top:687px;overflow:hidden" width="792" height="419" viewBox="103 687 792 419"><use href="#art"/><g transform="translate(198.47,847.70) scale(1.0010)" stroke="#2a1608" stroke-width="1.6" stroke-linejoin="round"><path d="M18,74 C4,70 2,88 18,90 C24,90 26,84 22,80Z" fill="#ef9d37"/><path d="M10,74 C5,76 5,82 9,84 C12,80 13,77 14,75Z" fill="#fff5ee" stroke="none"/><path d="M22,80 L20,96 Q25,100 30,96 L32,82Z" fill="#ef9d37"/><path d="M36,82 L38,96 Q43,100 47,96 L44,80Z" fill="#ef9d37"/><path d="M20.5,94 Q25,99 30,94.5 L30,96 Q25,100 20,96Z" fill="#fff5ee" stroke="none"/><path d="M38,94.5 Q43,99 47,94.5 L47,96 Q43,100 38,96Z" fill="#fff5ee" stroke="none"/><path d="M22,62 C18,70 20,82 24,84 L42,84 C47,80 47,70 43,62Z" fill="#ef9d37"/><path d="M28,62 C26,72 28,82 33,83 C39,82 40,72 38,62Z" fill="#fff5ee" stroke="none"/><path d="M23,64 C16,66 12,72 14,76 C17,77 19,74 24,70Z" fill="#ef9d37"/><path d="M42,63 C48,64 52,70 50,73 C46,74 45,71 41,69Z" fill="#ef9d37"/><circle cx="50" cy="72.5" r="2.6" fill="#fff5ee" stroke-width="1"/><path d="M10,40 C6,22 10,8 17,1 C24,8 30,18 32,26Z" fill="#ef9d37"/><path d="M38,24 C40,14 44,4 48,0 C54,8 56,24 54,36Z" fill="#ef9d37"/><path d="M14,34 C12,22 14,14 17,9 C21,14 24,20 26,26Z" fill="#fff5ee" stroke="none"/><path d="M42,24 C43,16 45,10 47.5,7 C50,13 51,22 50,30Z" fill="#fff5ee" stroke="none"/><path d="M1,48 C3,36 12,25 24,21 C29,19.5 35,19.5 40,21 C52,25 60,35 63,46 C60,50 58,52 56,56 C48,64 16,64 9,57 C7,53 4,51 1,48Z" fill="#ef9d37"/><path d="M1,48 C5,49 9,48 13,50 C18,56 26,52 29,40 L31,30 L34,30 L36,40 C39,52 47,56 52,49 C56,47 60,47 63,46 C60,50 58,52 56,56 C48,64 16,64 9,57 C7,53 4,51 1,48Z" fill="#fff5ee" stroke="none"/><path d="M14,37 C18,33 23,34 27,38 C23,36 18,36 14,37Z" fill="#fff5ee" stroke="none"/><path d="M38,38 C42,34 47,33 51,37 C47,36 42,36 38,38Z" fill="#fff5ee" stroke="none"/><circle cx="21.5" cy="47.5" r="5" fill="#3a2a20" stroke="none"/><circle cx="45.5" cy="47" r="5" fill="#3a2a20" stroke="none"/><circle cx="21.5" cy="47.5" r="3.2" fill="#151515" stroke="none"/><circle cx="45.5" cy="47" r="3.2" fill="#151515" stroke="none"/><circle cx="23.2" cy="45.6" r="1.7" fill="#fff" stroke="none"/><circle cx="47.2" cy="45.1" r="1.7" fill="#fff" stroke="none"/><ellipse cx="34" cy="52" rx="2.8" ry="1.9" fill="#f29aa4" stroke="none"/><path d="M34,54V56M32,57.5Q34,56 36,57.5" stroke="#3a2a20" stroke-width="0.8" fill="none"/></g><path d="M652.6,1068.4V1106" stroke="#b8f5a0" stroke-width="0.8" fill="none"/></svg>
<div style="left:9px;top:1106px;width:1902px;height:1px;background:#333;"></div>
<div style="left:991px;top:631px;width:118px;height:30px;background:#3c3c3c;border-radius:4px 4px 0 0;"></div>
<div style="left:991px;top:661px;width:482px;height:26px;background:#3c3c3c;"></div>
<div style="left:991px;top:687px;width:261px;height:420px;background:#383838;"></div>
<div style="left:1253px;top:687px;width:220px;height:420px;background:#383838;"></div>
<svg style="left:19px;top:12px" width="19" height="19" viewBox="0 0 24 24"><polygon points="12,0.8 21.8,6.4 21.8,17.6 12,23.2 2.2,17.6 2.2,6.4" fill="#4b5866"/><polygon points="12,2.6 20.2,7.3 20.2,16.7 12,21.4 3.8,16.7 3.8,7.3" fill="#c9d3dc"/><path d="M12,12 L12,21 M12,12 L4.2,7.5 M12,12 L19.8,7.5" stroke="#4b5866" stroke-width="2.6" fill="none"/><polygon points="12,4.5 17.2,7.5 12,10.5 6.8,7.5" fill="#4b5866" opacity="0.55"/><polygon points="5.6,10 10.4,12.8 10.4,18.6 5.6,15.8" fill="#4b5866" opacity="0.35"/><polygon points="18.4,10 13.6,12.8 13.6,18.6 18.4,15.8" fill="#4b5866" opacity="0.35"/></svg>
<span class="t" style="left:45px;top:15.00px;font-size:15.5px;line-height:15.5px;color:#1a1a1a;letter-spacing:-0.340px;">04Moviment - SampleScene - Windows, Mac, Linux - Unity 6 (6000.0.34f1)* &lt;DX11&gt;</span>
<svg style="left:1750px;top:8px" width="150" height="30" viewBox="0 0 150 30"><path d="M8,14.5H20" stroke="#1a1a1a" stroke-width="1.2" fill="none"/><rect x="66.5" y="8.5" width="11" height="11" rx="1.5" stroke="#1a1a1a" stroke-width="1.2" fill="none"/><path d="M124,7.5L138,21.5M138,7.5L124,21.5" stroke="#1a1a1a" stroke-width="1.2" fill="none"/></svg>
<span class="t" style="left:18px;top:46.00px;font-size:15.5px;line-height:15.5px;color:#111;letter-spacing:-0.494px;">File</span>
<span class="t" style="left:59px;top:46.00px;font-size:15.5px;line-height:15.5px;color:#111;letter-spacing:-0.177px;">Edit</span>
<span class="t" style="left:103px;top:46.00px;font-size:15.5px;line-height:15.5px;color:#111;letter-spacing:-0.919px;">Assets</span>
<span class="t" style="left:162px;top:46.00px;font-size:15.5px;line-height:15.5px;color:#111;letter-spacing:-0.401px;">GameObject</span>
<span class="t" style="left:263px;top:46.00px;font-size:15.5px;line-height:15.5px;color:#111;letter-spacing:-0.237px;">Component</span>
<span class="t" style="left:359px;top:46.00px;font-size:15.5px;line-height:15.5px;color:#111;letter-spacing:-0.804px;">Services</span>
<span class="t" style="left:430px;top:46.00px;font-size:15.5px;line-height:15.5px;color:#111;letter-spacing:-0.810px;">Jobs</span>
<span class="t" style="left:477.3px;top:46.00px;font-size:15.5px;line-height:15.5px;color:#111;letter-spacing:-0.297px;">Tools</span>
<span class="t" style="left:530px;top:46.00px;font-size:15.5px;line-height:15.5px;color:#111;letter-spacing:-0.021px;">Window</span>
<span class="t" style="left:603.4px;top:46.00px;font-size:15.5px;line-height:15.5px;color:#111;letter-spacing:-0.169px;">Help</span>
<svg style="left:20px;top:77px" width="24" height="24" viewBox="0 0 24 24"><polygon points="12,0.8 21.8,6.4 21.8,17.6 12,23.2 2.2,17.6 2.2,6.4" fill="#3b4651"/><polygon points="12,2.6 20.2,7.3 20.2,16.7 12,21.4 3.8,16.7 3.8,7.3" fill="#c5ccd3"/><path d="M12,12 L12,21 M12,12 L4.2,7.5 M12,12 L19.8,7.5" stroke="#3b4651" stroke-width="2.6" fill="none"/><polygon points="12,4.5 17.2,7.5 12,10.5 6.8,7.5" fill="#3b4651" opacity="0.55"/><polygon points="5.6,10 10.4,12.8 10.4,18.6 5.6,15.8" fill="#3b4651" opacity="0.35"/><polygon points="18.4,10 13.6,12.8 13.6,18.6 18.4,15.8" fill="#3b4651" opacity="0.35"/></svg>
<span class="t" style="left:47px;top:81.00px;font-size:16px;line-height:16px;color:#f2f2f2;letter-spacing:-0.478px;font-weight:bold;">Unity 6</span>
<div style="left:108px;top:79px;width:1px;height:19px;background:#5a5a5a;"></div>
<svg style="left:126px;top:79px" width="18" height="18" viewBox="0 0 18 18"><circle cx="9" cy="9" r="7.6" fill="none" stroke="#c4c4c4" stroke-width="1.6"/><circle cx="9" cy="7" r="2.8" fill="#c4c4c4"/><path d="M3.6,14.2C5,10.8 13,10.8 14.4,14.2C12,17 6,17 3.6,14.2Z" fill="#c4c4c4"/></svg>
<span class="t" style="left:151px;top:81.00px;font-size:16px;line-height:16px;color:#c4c4c4;letter-spacing:-1.387px;">JF</span>
<svg style="left:174px;top:86px" width="11" height="6" viewBox="0 0 11 6"><polygon points="0,0 11,0 5.5,6" fill="#c4c4c4"/></svg>
<svg style="left:207px;top:79px" width="16" height="18" viewBox="0 0 16 18"><path d="M1.5,6H14.5V16.5H1.5Z" fill="#c4c4c4"/><path d="M5,7V4.2C5,1.2 11,1.2 11,4.2V7" fill="none" stroke="#c4c4c4" stroke-width="1.5"/></svg>
<span class="t" style="left:230px;top:81.00px;font-size:16px;line-height:16px;color:#c4c4c4;letter-spacing:-0.064px;">Asset Store</span>
<svg style="left:319px;top:86px" width="11" height="6" viewBox="0 0 11 6"><polygon points="0,0 11,0 5.5,6" fill="#c4c4c4"/></svg>
<svg style="left:354px;top:80px" width="20" height="18" viewBox="0 0 20 18"><g fill="none" stroke="#c4c4c4" stroke-width="1.4"><circle cx="3.2" cy="4" r="2.2"/><circle cx="16.2" cy="4" r="2.2"/><circle cx="16.2" cy="13.5" r="2.2"/><path d="M5.4,4H14M8,4C10,4 9.5,13.5 14,13.5"/></g></svg>
<div style="left:901px;top:76px;width:40px;height:25px;background:#525252;border-radius:4px 1px 1px 4px;"></div>
<div style="left:943px;top:76px;width:40px;height:25px;background:#525252;border-radius:1px;"></div>
<div style="left:985px;top:76px;width:40px;height:25px;background:#343434;border-radius:1px 4px 4px 1px;"></div>
<svg style="left:900px;top:76px" width="126" height="25" viewBox="0 0 126 25"><polygon points="15.7,6.6 26,12.9 15.7,19.2" fill="#d2d2d2"/><rect x="57.8" y="6.8" width="3.5" height="12.3" fill="#d2d2d2"/><rect x="64.6" y="6.8" width="3.5" height="12.3" fill="#d2d2d2"/><polygon points="98.7,6.8 107.5,12.9 98.7,19.2" fill="#a6a6a6"/><rect x="108.9" y="6.8" width="2.2" height="12.3" fill="#a6a6a6"/></svg>
<svg style="left:1668px;top:81px" width="21" height="14" viewBox="0 0 21 14"><path d="M5,13.5C-0.5,13.5 -0.3,6.5 4.3,6.3C4.8,1.5 11,-0.5 14,3.8C19.5,3 21.5,8 19.5,11.5C18.5,13 17,13.5 16,13.5Z" fill="#c4c4c4"/></svg>
<svg style="left:1714px;top:79px" width="20" height="19" viewBox="0 0 20 19"><g fill="none" stroke="#c4c4c4" stroke-width="1.6"><path d="M3.2,9.5A7.4,7.4 0 1 1 5.2,14.6"/><path d="M10.6,5.3V10L13.6,11.8"/></g><polygon points="0.2,7.2 6.4,7.2 3.3,11" fill="#c4c4c4"/></svg>
<svg style="left:1761px;top:80px" width="18" height="18" viewBox="0 0 18 18"><circle cx="7" cy="7" r="5.2" fill="none" stroke="#c4c4c4" stroke-width="1.7"/><path d="M10.8,10.8L16.2,16.2" stroke="#c4c4c4" stroke-width="2" /></svg>
<svg style="left:1804px;top:81px" width="16" height="15" viewBox="0 0 16 15"><rect x="0.8" y="0.8" width="14.4" height="13.4" rx="1.5" fill="none" stroke="#c4c4c4" stroke-width="1.5"/><rect x="3.3" y="3.5" width="3.6" height="8" fill="#c4c4c4"/><rect x="8.6" y="3.5" width="4.2" height="3" fill="#c4c4c4"/><rect x="8.6" y="8.2" width="4.2" height="3.3" fill="#c4c4c4"/></svg>
<span class="t" style="left:1826.5px;top:81.00px;font-size:16px;line-height:16px;color:#c4c4c4;letter-spacing:-0.007px;">Layout</span>
<svg style="left:1881px;top:86px" width="11" height="6" viewBox="0 0 11 6"><polygon points="0,0 11,0 5.5,6" fill="#c4c4c4"/></svg>
<svg style="left:20px;top:120px" width="14" height="14" viewBox="0 0 14 14"><path d="M0.5,4.3H13.5M0.5,9.3H13.5M4.3,0.5V13.5M9.3,0.5V13.5" stroke="#c4c4c4" stroke-width="1.4" fill="none"/></svg>
<span class="t" style="left:40px;top:120.00px;font-size:15.5px;line-height:15.5px;color:#d2d2d2;letter-spacing:0.010px;">Scene</span>
<svg style="left:135px;top:120px" width="14" height="14" viewBox="0 0 14 14"><path d="M1,1.5C4,3 5,6.5 6.5,6.8H12M1,12.5C3,11.5 4,8 5.5,7" stroke="#d0d0d0" stroke-width="1.6" fill="none"/><path d="M9.5,3.8L12.8,6.8L9.5,9.8" stroke="#d0d0d0" stroke-width="1.6" fill="none"/></svg>
<span class="t" style="left:153.3px;top:120.00px;font-size:15.5px;line-height:15.5px;color:#d2d2d2;letter-spacing:0.185px;">Animator</span>
<svg style="left:966.5px;top:119px" width="4" height="14" viewBox="0 0 4 14"><circle cx="2" cy="2" r="1.55" fill="#d8d8d8"/><circle cx="2" cy="7" r="1.55" fill="#d8d8d8"/><circle cx="2" cy="12" r="1.55" fill="#d8d8d8"/></svg>
<div style="left:16px;top:148px;width:1px;height:20px;background:#6a6a6a;"></div>
<div style="left:19px;top:148px;width:1px;height:20px;background:#6a6a6a;"></div>
<div style="left:29px;top:145px;width:101px;height:25px;background:#585858;border-radius:3px;"></div>
<svg style="left:34px;top:148px" width="19" height="19" viewBox="0 0 19 19"><rect x="0.7" y="0.7" width="17.6" height="17.6" rx="2" fill="none" stroke="#c4c4c4" stroke-width="1.2"/><path d="M3.5,15.5L15.5,3.5" stroke="#c4c4c4" stroke-width="1.1"/><circle cx="9.5" cy="9.5" r="3.1" fill="#585858" stroke="#f0643c" stroke-width="1.5"/></svg>
<span class="t" style="left:57px;top:150.00px;font-size:15.5px;line-height:15.5px;color:#d2d2d2;letter-spacing:0.080px;">Center</span>
<svg style="left:112px;top:155px" width="10" height="5.5" viewBox="0 0 10 5.5"><polygon points="0,0 10,0 5.0,5.5" fill="#c4c4c4"/></svg>
<div style="left:134px;top:145px;width:89px;height:25px;background:#585858;border-radius:3px;"></div>
<svg style="left:139px;top:148px" width="19" height="20" viewBox="0 0 19 20"><g fill="none" stroke="#c4c4c4" stroke-width="1.15" stroke-linejoin="round"><polygon points="9,1 17.2,5 17.2,13.5 9,17.5 0.8,13.5 0.8,5"/><path d="M0.8,5L9,9L17.2,5M9,9V17.5"/></g><circle cx="14" cy="15" r="3.2" fill="#585858" stroke="#f0643c" stroke-width="1.5"/></svg>
<span class="t" style="left:161.5px;top:150.00px;font-size:15.5px;line-height:15.5px;color:#d2d2d2;letter-spacing:-0.011px;">Local</span>
<svg style="left:206px;top:155px" width="10" height="5.5" viewBox="0 0 10 5.5"><polygon points="0,0 10,0 5.0,5.5" fill="#c4c4c4"/></svg>
<div style="left:234px;top:148px;width:1px;height:20px;background:#6a6a6a;"></div>
<div style="left:237px;top:148px;width:1px;height:20px;background:#6a6a6a;"></div>
<div style="left:249px;top:145px;width:46px;height:25px;background:#2a2a2a;border-radius:3px;border:1px solid #1e1e1e;"></div>
<span class="t" style="left:257px;top:150.00px;font-size:15.5px;line-height:15.5px;color:#d2d2d2;">1</span>
<div style="left:301px;top:145px;width:27.5px;height:25px;background:#46607c;border-radius:3px 0 0 3px;"></div>
<div style="left:329.5px;top:145px;width:17.5px;height:25px;background:#46607c;border-radius:0 3px 3px 0;"></div>
<svg style="left:305px;top:148px" width="20" height="19" viewBox="0 0 20 19"><path d="M1,5.5H17M1,12H12M5,1.5V17M11.5,1.5V12" stroke="#e8e8e8" stroke-width="1.5" fill="none"/><path d="M12.2,10.2L15.4,14.4L18.6,10.2M15.4,14.4V18.6" stroke="#fff" stroke-width="1.9" fill="none"/></svg>
<svg style="left:333.5px;top:155px" width="10" height="5.5" viewBox="0 0 10 5.5"><polygon points="0,0 10,0 5.0,5.5" fill="#d8d8d8"/></svg>
<div style="left:351px;top:145px;width:28px;height:25px;background:#585858;border-radius:3px 0 0 3px;"></div>
<div style="left:380px;top:145px;width:17px;height:25px;background:#585858;border-radius:0 3px 3px 0;"></div>
<svg style="left:355px;top:148px" width="20" height="19" viewBox="0 0 20 19"><path d="M1,5.5H17M1,12H9M5,1.5V17M11.5,1.5V9" stroke="#c4c4c4" stroke-width="1.2" stroke-dasharray="2.2 1" fill="none"/><path d="M9.5,11.4H14.2A2.6,2.6 0 0 1 14.2,16.6H9.5" stroke="#f0643c" stroke-width="2.2" fill="none"/><rect x="7.6" y="10.2" width="2.4" height="2.4" fill="#fff"/><rect x="7.6" y="15.4" width="2.4" height="2.4" fill="#fff"/></svg>
<svg style="left:383.5px;top:155px" width="10" height="5.5" viewBox="0 0 10 5.5"><polygon points="0,0 10,0 5.0,5.5" fill="#c4c4c4"/></svg>
<div style="left:409px;top:148px;width:1px;height:20px;background:#6a6a6a;"></div>
<div style="left:412px;top:148px;width:1px;height:20px;background:#6a6a6a;"></div>
<div style="left:421px;top:145px;width:40.3px;height:25px;background:#585858;border-radius:3px 0 0 3px;"></div>
<div style="left:462.3px;top:145px;width:40px;height:25px;background:#585858;"></div>
<div style="left:503.3px;top:145px;width:40px;height:25px;background:#585858;"></div>
<div style="left:544.3px;top:145px;width:40px;height:25px;background:#46607c;border-radius:0 3px 3px 0;"></div>
<svg style="left:431px;top:147px" width="21" height="21" viewBox="0 0 21 21"><g fill="none" stroke="#c8c8c8" stroke-width="1.4"><circle cx="10.5" cy="10.5" r="8"/><path d="M10.5,2.5V18.5M2.5,11.5C6,13.5 15,13.5 18.5,11.5"/></g></svg>
<svg style="left:472px;top:147px" width="21" height="21" viewBox="0 0 21 21"><circle cx="10.5" cy="10.5" r="8" fill="none" stroke="#c8c8c8" stroke-width="1.4"/><path d="M10.5,2.5V12.5M2.6,11.5C6,13.5 15,13.5 18.4,11.5" stroke="#c8c8c8" stroke-width="1.4" fill="none"/><path d="M2.8,12C6,13.8 15,13.8 18.2,12A8,8 0 0 1 2.8,12Z" fill="#c8c8c8"/></svg>
<svg style="left:513px;top:147px" width="21" height="21" viewBox="0 0 21 21"><circle cx="10.5" cy="10.5" r="8.6" fill="#c8c8c8"/></svg>
<svg style="left:554px;top:147px" width="21" height="21" viewBox="0 0 21 21"><circle cx="10.5" cy="10.5" r="8.6" fill="#f0f0f0"/><circle cx="9.2" cy="9" r="6.2" fill="#46607c"/></svg>
<div style="left:588px;top:145px;width:28px;height:25px;background:#585858;border-radius:3px 0 0 3px;"></div>
<div style="left:617px;top:145px;width:17px;height:25px;background:#585858;border-radius:0 3px 3px 0;"></div>
<svg style="left:592px;top:147px" width="20" height="20" viewBox="0 0 20 20"><ellipse cx="10" cy="12" rx="5" ry="6.4" fill="#c4c4c4"/><circle cx="10" cy="5.2" r="3" fill="#c4c4c4"/><path d="M5.5,9L1.8,6.5M5,12.5H1.2M5.5,15.5L2,18.2M14.5,9L18.2,6.5M15,12.5H18.8M14.5,15.5L18,18.2M7.5,3L5.5,0.8M12.5,3L14.5,0.8" stroke="#c4c4c4" stroke-width="1.4" fill="none"/></svg>
<svg style="left:620.5px;top:155px" width="10" height="5.5" viewBox="0 0 10 5.5"><polygon points="0,0 10,0 5.0,5.5" fill="#c4c4c4"/></svg>
<div style="left:646px;top:148px;width:1px;height:20px;background:#6a6a6a;"></div>
<div style="left:649px;top:148px;width:1px;height:20px;background:#6a6a6a;"></div>
<div style="left:658px;top:145px;width:40px;height:25px;background:#46607c;border-radius:3px;"></div>
<span class="t" style="left:670px;top:151.00px;font-size:14.5px;line-height:14.5px;color:#f0f0f0;letter-spacing:-1.518px;text-shadow:0 0 0.6px #f0f0f0;">2D</span>
<div style="left:702px;top:145px;width:40px;height:25px;background:#585858;border-radius:3px;"></div>
<svg style="left:712px;top:148px" width="20" height="19" viewBox="0 0 20 19"><path d="M2,17L17,2" stroke="#c4c4c4" stroke-width="1.3"/><path d="M10.5,5.5V13.5L14.5,16V9Z" fill="#c4c4c4"/></svg>
<div style="left:746px;top:145px;width:28px;height:25px;background:#46607c;border-radius:3px 0 0 3px;"></div>
<div style="left:775px;top:145px;width:17px;height:25px;background:#46607c;border-radius:0 3px 3px 0;"></div>
<svg style="left:750px;top:148px" width="20" height="19" viewBox="0 0 20 19"><path d="M1.5,10.5L8,7.5L14.5,10.5L8,13.5Z" fill="#f0f0f0"/><path d="M1.5,14L8,17L14.5,14" fill="none" stroke="#f0f0f0" stroke-width="1.5"/><path d="M14,1L15.3,4.7L19,6L15.3,7.3L14,11L12.7,7.3L9,6L12.7,4.7Z" fill="#f0f0f0"/></svg>
<svg style="left:778.5px;top:155px" width="10" height="5.5" viewBox="0 0 10 5.5"><polygon points="0,0 10,0 5.0,5.5" fill="#d8d8d8"/></svg>
<div style="left:796px;top:145px;width:40px;height:25px;background:#46607c;border-radius:3px;"></div>
<svg style="left:806px;top:150px" width="20" height="14" viewBox="0 0 20 14"><path d="M1,7C5,0.5 15,0.5 19,7C15,13.5 5,13.5 1,7Z" fill="none" stroke="#e4e4e4" stroke-width="1.4"/><circle cx="10" cy="6.5" r="3.3" fill="#e4e4e4"/></svg>
<div style="left:840px;top:145px;width:46px;height:25px;background:#585858;border-radius:3px;"></div>
<svg style="left:846px;top:150px" width="17" height="15" viewBox="0 0 17 15"><path d="M1,5L8.5,1.2L16,5L8.5,8.8Z" fill="#c4c4c4"/><path d="M1,9.2L8.5,13L16,9.2" fill="none" stroke="#c4c4c4" stroke-width="1.7"/></svg>
<svg style="left:868px;top:155px" width="10" height="5.5" viewBox="0 0 10 5.5"><polygon points="0,0 10,0 5.0,5.5" fill="#c4c4c4"/></svg>
<div style="left:890px;top:145px;width:45px;height:25px;background:#585858;border-radius:3px;"></div>
<svg style="left:896px;top:151px" width="18" height="13" viewBox="0 0 18 13"><rect x="0.5" y="1" width="10" height="11" rx="1" fill="#c4c4c4"/><path d="M12,4.5L16.5,1.5C15,4.5 15,8.5 16.5,11.5L12,8.5Z" fill="#c4c4c4"/></svg>
<svg style="left:917px;top:155px" width="10" height="5.5" viewBox="0 0 10 5.5"><polygon points="0,0 10,0 5.0,5.5" fill="#c4c4c4"/></svg>
<div style="left:939px;top:145px;width:28px;height:25px;background:#46607c;border-radius:3px 0 0 3px;"></div>
<div style="left:968px;top:145px;width:17.5px;height:25px;background:#46607c;border-radius:0 3px 3px 0;"></div>
<svg style="left:943px;top:147px" width="21" height="21" viewBox="0 0 21 21"><g fill="none" stroke="#f0f0f0" stroke-width="1.4"><circle cx="10.5" cy="11" r="7.8"/><path d="M3,9.5C7,7 8,5 10.5,2.8M10.5,2.8C13,7 13,10 12.5,13M3,9.5C7,12 9,13 12.5,13M12.5,13C14,15 15,16 16,16.5"/></g><circle cx="10.5" cy="3" r="1.9" fill="#f0f0f0"/><circle cx="3" cy="9.5" r="1.9" fill="#f0f0f0"/><circle cx="12.5" cy="13" r="1.9" fill="#f0f0f0"/></svg>
<svg style="left:971.5px;top:155px" width="10" height="5.5" viewBox="0 0 10 5.5"><polygon points="0,0 10,0 5.0,5.5" fill="#d8d8d8"/></svg>
<div style="left:9px;top:173px;width:977px;height:1px;background:#2b2b2b;"></div>
<div style="left:9px;top:686px;width:980px;height:1px;background:#2b2b2b;"></div>
<div style="left:991px;top:686px;width:482px;height:1px;background:#2b2b2b;"></div>
<div style="left:1028px;top:186px;width:445px;height:1px;background:#323232;"></div>
<div style="left:12px;top:177px;width:54px;height:180.5px;background:#101010;border-radius:4px;"></div>
<div style="left:29px;top:185px;width:20px;height:1px;background:#7a7a7a;"></div>
<div style="left:29px;top:188px;width:20px;height:1px;background:#7a7a7a;"></div>
<div style="left:16px;top:199.1px;width:46px;height:24.8px;background:#585858;border-radius:3px 3px 0 0;"></div>
<div style="left:16px;top:225.04px;width:46px;height:24.8px;background:#46607c;"></div>
<div style="left:16px;top:250.98px;width:46px;height:24.8px;background:#585858;"></div>
<div style="left:16px;top:276.92px;width:46px;height:24.8px;background:#585858;"></div>
<div style="left:16px;top:302.86px;width:46px;height:24.8px;background:#585858;"></div>
<div style="left:16px;top:328.8px;width:46px;height:24.8px;background:#585858;border-radius:0 0 3px 3px;"></div>
<svg style="left:29px;top:201px" width="20" height="21" viewBox="0 0 20 21"><path d="M5.2,12V5.2C5.2,3.6 7.2,3.6 7.2,5.2V3C7.2,1.3 9.4,1.3 9.4,3V2.4C9.4,0.7 11.6,0.7 11.6,2.4V3.6C11.6,2 13.8,2 13.8,3.6V11C14.6,9.6 15.6,8.2 17,7.8C18.4,7.8 18,9 17.6,9.8C16.4,12.4 15.4,15 14,17.4C13,19.4 11.6,20.4 9.4,20.4C6.4,20.4 4.6,18.6 3.8,16L1.6,9.6C1.2,8.2 2.8,7.6 3.5,8.8Z" fill="#d0d0d0"/></svg>
<svg style="left:28px;top:226.5px" width="22" height="22" viewBox="0 0 22 22"><g stroke="#f0f0f0" stroke-width="1.3" fill="none"><path d="M11,1.5V8.5M11,13.5V20.5M1.5,11H8.5M13.5,11H20.5"/><path d="M8,4.5L11,1.5L14,4.5M8,17.5L11,20.5L14,17.5M4.5,8L1.5,11L4.5,14M17.5,8L20.5,11L17.5,14"/></g></svg>
<svg style="left:29px;top:253px" width="20" height="21" viewBox="0 0 20 21"><g stroke="#d0d0d0" stroke-width="1.3" fill="none"><path d="M10.5,18.6A8,8 0 0 0 15.6,4.4M9.5,2.4A8,8 0 0 0 4.4,16.6"/><path d="M11.2,4.2H15.8V8.8M8.8,16.8H4.2V12.2"/></g></svg>
<svg style="left:29px;top:279px" width="20" height="20" viewBox="0 0 20 20"><g stroke="#d0d0d0" stroke-width="1.3" fill="none"><rect x="1" y="1" width="18" height="18" rx="2"/><rect x="1" y="13" width="6" height="6"/><path d="M8.5,11.5L15,5M10.5,4.6H15.4V9.5"/></g></svg>
<svg style="left:29px;top:305px" width="20" height="20" viewBox="0 0 20 20"><path d="M5,2.5H15M5,17.5H15M2.5,5V15M17.5,5V15" stroke="#d0d0d0" stroke-width="1.3" fill="none"/><g fill="#d0d0d0"><rect x="0.8" y="0.8" width="3.6" height="3.6"/><rect x="15.6" y="0.8" width="3.6" height="3.6"/><rect x="0.8" y="15.6" width="3.6" height="3.6"/><rect x="15.6" y="15.6" width="3.6" height="3.6"/></g></svg>
<svg style="left:28px;top:330.5px" width="22" height="22" viewBox="0 0 22 22"><g stroke="#d0d0d0" stroke-width="1.2" fill="none"><circle cx="11" cy="11" r="7.6"/><path d="M11,5V17M5,11H17M9,7L11,5L13,7M9,15L11,17L13,15M7,9L5,11L7,13M15,9L17,11L15,13"/></g><path d="M0.5,0.5H4L0.5,4ZM21.5,0.5H18L21.5,4ZM0.5,21.5H4L0.5,18ZM21.5,21.5H18L21.5,18Z" fill="#d0d0d0"/></svg>
<div style="left:12px;top:593px;width:351px;height:32.5px;background:#101010;border-radius:4px;"></div>
<div style="left:19.5px;top:599.5px;width:1px;height:19.5px;background:#6a6a6a;"></div>
<div style="left:23px;top:599.5px;width:1px;height:19.5px;background:#6a6a6a;"></div>
<div style="left:32.0px;top:597.2px;width:40px;height:24.2px;background:#46607c;border-radius:3px 0 0 3px;"></div>
<div style="left:73.07px;top:597.2px;width:40px;height:24.2px;background:#46607c;"></div>
<div style="left:114.14px;top:597.2px;width:40px;height:24.2px;background:#46607c;"></div>
<div style="left:155.21px;top:597.2px;width:40px;height:24.2px;background:#46607c;"></div>
<div style="left:196.28px;top:597.2px;width:40px;height:24.2px;background:#46607c;"></div>
<div style="left:237.35px;top:597.2px;width:40px;height:24.2px;background:#585858;"></div>
<div style="left:278.42px;top:597.2px;width:40px;height:24.2px;background:#585858;"></div>
<div style="left:319.49px;top:597.2px;width:40px;height:24.2px;background:#585858;border-radius:0 3px 3px 0;"></div>
<svg style="left:41.5px;top:598.5px" width="22" height="22" viewBox="0 0 22 22"><g stroke="#e8e8e8" stroke-width="1.3" fill="none"><path d="M11,1.5V8.5M11,13.5V20.5M1.5,11H8.5M13.5,11H20.5"/><path d="M8,4.5L11,1.5L14,4.5M8,17.5L11,20.5L14,17.5M4.5,8L1.5,11L4.5,14M17.5,8L20.5,11L17.5,14"/></g></svg>
<svg style="left:82.57px;top:599px" width="21" height="21" viewBox="0 0 21 21"><rect x="4" y="1.5" width="13" height="5" fill="none" stroke="#e8e8e8" stroke-width="1.4"/><rect x="4" y="1.5" width="6" height="5" fill="#e8e8e8"/><path d="M3,11.5H18M3,17H18" stroke="#e8e8e8" stroke-width="1.4"/><path d="M8,9V14M13,14.5V19.5" stroke="#e8e8e8" stroke-width="2"/></svg>
<svg style="left:123.64px;top:599px" width="21" height="21" viewBox="0 0 21 21"><path d="M1,6H12M1,11H8M5,2V15M9.5,2V9M2,19L19,2M11,12.5H20M13,16H20M15,9V20M18.5,6V20" stroke="#e8e8e8" stroke-width="1.2" fill="none"/></svg>
<svg style="left:164.71px;top:599px" width="21" height="21" viewBox="0 0 21 21"><circle cx="10.5" cy="10.5" r="8.6" fill="#e8e8e8"/><circle cx="9.2" cy="9" r="6.2" fill="#46607c"/></svg>
<svg style="left:205.78px;top:599px" width="21" height="21" viewBox="0 0 21 21"><circle cx="6" cy="4.5" r="2.6" fill="#e8e8e8"/><path d="M10.5,8.5L19.5,13.5L10.5,18.5L1.5,13.5ZM6,11L15,16M15,11L6,16" fill="none" stroke="#e8e8e8" stroke-width="1.3"/></svg>
<svg style="left:249.85px;top:601.5px" width="17" height="17" viewBox="0 0 16 16"><circle cx="6.4" cy="6.4" r="5" fill="none" stroke="#d0d0d0" stroke-width="1.5"/><path d="M10,10L15,15" stroke="#d0d0d0" stroke-width="2"/></svg>
<svg style="left:287.92px;top:599px" width="21" height="21" viewBox="0 0 21 21"><rect x="1" y="1.5" width="11" height="9.5" rx="1" fill="#d0d0d0"/><path d="M12.5,5L17,2V10.5L12.5,7.5Z" fill="#d0d0d0"/><path d="M6,15.5C9,11.5 15.5,11.5 18.5,15.5C15.5,19.5 9,19.5 6,15.5Z" fill="#585858" stroke="#d0d0d0" stroke-width="1.2"/><circle cx="12.2" cy="15.5" r="1.8" fill="#d0d0d0"/></svg>
<svg style="left:328.99px;top:600px" width="21" height="19" viewBox="0 0 21 19"><g stroke="#b18cf2" stroke-width="1.6" fill="none"><path d="M1,4.5H5C9,4.5 10,14.5 14,14.5H17M1,14.5H5C6.5,14.5 7.5,13 8.3,11.5M11,7.2C11.8,5.8 12.6,4.5 14,4.5H17"/></g><path d="M15.5,1L20.5,4.5L15.5,8ZM15.5,11L20.5,14.5L15.5,18Z" fill="#b18cf2"/></svg>
<svg style="left:400px;top:460px" width="36" height="36" viewBox="400 460 36 36"><g fill="#ffffff"><circle cx="415.6" cy="480.2" r="11.4"/><circle cx="425.8" cy="469.3" r="4.8"/><circle cx="414.4" cy="466.2" r="2.3"/><path d="M424,476.6H429L430.5,478V484L429,485.6H424Z"/></g><path d="M406,476C411,472 420,472 425,476M406,485C411,489 420,489 425,485M411,470C408,476 408,485 411,490.5M420,470C423,476 423,485 420,490.5" stroke="#a9bdb6" stroke-width="1" fill="none"/></svg>
<svg style="left:1000px;top:120px" width="15" height="12" viewBox="0 0 15 12"><path d="M3.5,1.5H14.5M5.5,6H14.5M5.5,10.5H14.5" stroke="#c8c8c8" stroke-width="1.5" fill="none"/><path d="M0.3,1.5L3,0V3Z" fill="#c8c8c8"/><rect x="2.6" y="5.2" width="1.8" height="1.8" fill="#c8c8c8"/><rect x="2.6" y="9.6" width="1.8" height="1.8" fill="#c8c8c8"/></svg>
<span class="t" style="left:1020.7px;top:120.00px;font-size:15.5px;line-height:15.5px;color:#d2d2d2;letter-spacing:0.075px;">Hierarchy</span>
<svg style="left:1429px;top:119.5px" width="12" height="12" viewBox="0 0 12 12"><rect x="0.7" y="6" width="9.6" height="5.3" rx="0.8" fill="none" stroke="#d0d0d0" stroke-width="1.3"/><path d="M4.2,1.6C6.5,0 9.5,1.2 9.2,6" fill="none" stroke="#d0d0d0" stroke-width="1.3"/></svg>
<svg style="left:1454px;top:119px" width="4" height="14" viewBox="0 0 4 14"><circle cx="2" cy="2" r="1.55" fill="#d8d8d8"/><circle cx="2" cy="7" r="1.55" fill="#d8d8d8"/><circle cx="2" cy="12" r="1.55" fill="#d8d8d8"/></svg>
<svg style="left:996px;top:146px" width="16" height="16" viewBox="0 0 16 16"><path d="M8,0.5V15.5M0.5,8H15.5" stroke="#d0d0d0" stroke-width="1.7" fill="none"/></svg>
<svg style="left:1017px;top:151px" width="9.5" height="5.5" viewBox="0 0 9.5 5.5"><polygon points="0,0 9.5,0 4.75,5.5" fill="#c4c4c4"/></svg>
<div style="left:1062px;top:144.5px;width:406px;height:19.5px;background:#2a2a2a;border-radius:4px;border:1px solid #1f1f1f;"></div>
<div style="left:1447.5px;top:145.5px;width:19.5px;height:17.5px;background:#404040;border-radius:0 3px 3px 0;border-left:1px solid #242424;"></div>
<svg style="left:1068px;top:148px" width="14" height="12" viewBox="0 0 14 12"><circle cx="4" cy="4.6" r="2.9" fill="none" stroke="#b8b8b8" stroke-width="1.3"/><path d="M6,6.8L9.4,10.4" stroke="#b8b8b8" stroke-width="1.5"/><path d="M9.6,3.8H13.4L11.5,6Z" fill="#b8b8b8"/></svg>
<span class="t" style="left:1085px;top:147.00px;font-size:15.5px;line-height:15.5px;color:#7c7c7c;letter-spacing:-0.575px;">All</span>
<svg style="left:1450.5px;top:147px" width="14" height="14" viewBox="0 0 14 14"><g fill="none" stroke="#b8b8b8" stroke-width="1.2"><path d="M3.2,7.5V2.2C3.2,1.6 3.6,1.2 4.2,1.2H11.8C12.4,1.2 12.8,1.6 12.8,2.2V9.8C12.8,10.4 12.4,10.8 11.8,10.8H6.5"/><rect x="0.8" y="8.2" width="5" height="5" rx="0.8"/><path d="M6,8L10.2,3.8M7,3.6H10.4V7"/></g></svg>
<div style="left:988px;top:166px;width:40px;height:463px;background:#2e2e2e;"></div>
<div style="left:988px;top:166px;width:485px;height:20.5px;background:#2c2c2c;"></div>
<svg style="left:1030px;top:173px" width="12" height="9" viewBox="0 0 12 9"><polygon points="0.5,0.5 11.5,0.5 6,8.5" fill="#6e6e6e"/></svg>
<svg style="left:1046.5px;top:167.5px" width="17.5" height="17.5" viewBox="0 0 20 20"><path d="M10,0.5L18.4,5.3V14.7L10,19.5L1.6,14.7V5.3Z" fill="#e4e4e4"/><path d="M10,10V18M10,10L3,6M10,10L17,6" stroke="#2d2d2d" stroke-width="2.4" fill="none"/><path d="M10,1V6M2.2,14.2L6.5,11.8M17.8,14.2L13.5,11.8" stroke="#2d2d2d" stroke-width="2.2" fill="none"/></svg>
<span class="t" style="left:1069px;top:169.00px;font-size:15.5px;line-height:15.5px;color:#e2e2e2;letter-spacing:0.139px;font-weight:bold;">SampleScene*</span>
<svg style="left:1455px;top:169px" width="4" height="14" viewBox="0 0 4 14"><circle cx="2" cy="2" r="1.55" fill="#d8d8d8"/><circle cx="2" cy="7" r="1.55" fill="#d8d8d8"/><circle cx="2" cy="12" r="1.55" fill="#d8d8d8"/></svg>
<svg style="left:1064px;top:187.5px" width="17" height="18" viewBox="0 0 17 18"><g fill="none" stroke="#c4c4c4" stroke-width="1.25" stroke-linejoin="round"><polygon points="8.5,0.9 16,4.9 16,13.1 8.5,17.1 1,13.1 1,4.9"/><path d="M1,4.9L8.5,8.9L16,4.9M8.5,8.9V17.1"/></g></svg>
<span class="t" style="left:1085.5px;top:189.00px;font-size:15.5px;line-height:15.5px;color:#d2d2d2;letter-spacing:-0.048px;">Main Camera</span>
<svg style="left:1064px;top:207.5px" width="17" height="18" viewBox="0 0 17 18"><g fill="none" stroke="#c4c4c4" stroke-width="1.25" stroke-linejoin="round"><polygon points="8.5,0.9 16,4.9 16,13.1 8.5,17.1 1,13.1 1,4.9"/><path d="M1,4.9L8.5,8.9L16,4.9M8.5,8.9V17.1"/></g></svg>
<span class="t" style="left:1085.5px;top:209.00px;font-size:15.5px;line-height:15.5px;color:#d2d2d2;letter-spacing:0.057px;">Global Light 2D</span>
<svg style="left:1064px;top:227.5px" width="17" height="18" viewBox="0 0 17 18"><g fill="none" stroke="#c4c4c4" stroke-width="1.25" stroke-linejoin="round"><polygon points="8.5,0.9 16,4.9 16,13.1 8.5,17.1 1,13.1 1,4.9"/><path d="M1,4.9L8.5,8.9L16,4.9M8.5,8.9V17.1"/></g></svg>
<span class="t" style="left:1085.5px;top:229.00px;font-size:15.5px;line-height:15.5px;color:#d2d2d2;letter-spacing:0.178px;">Background</span>
<svg style="left:1064px;top:247.5px" width="17" height="18" viewBox="0 0 17 18"><g fill="none" stroke="#c4c4c4" stroke-width="1.25" stroke-linejoin="round"><polygon points="8.5,0.9 16,4.9 16,13.1 8.5,17.1 1,13.1 1,4.9"/><path d="M1,4.9L8.5,8.9L16,4.9M8.5,8.9V17.1"/></g></svg>
<span class="t" style="left:1085.5px;top:249.00px;font-size:15.5px;line-height:15.5px;color:#d2d2d2;letter-spacing:0.077px;">Floor</span>
<svg style="left:1064px;top:267.5px" width="17" height="18" viewBox="0 0 17 18"><g fill="none" stroke="#c4c4c4" stroke-width="1.25" stroke-linejoin="round"><polygon points="8.5,0.9 16,4.9 16,13.1 8.5,17.1 1,13.1 1,4.9"/><path d="M1,4.9L8.5,8.9L16,4.9M8.5,8.9V17.1"/></g></svg>
<span class="t" style="left:1085.5px;top:269.00px;font-size:15.5px;line-height:15.5px;color:#d2d2d2;letter-spacing:-0.336px;">Player1</span>
<svg style="left:1049px;top:251.5px" width="9" height="10" viewBox="0 0 9 10"><polygon points="0,0 9,5.0 0,10" fill="#7c7c7c"/></svg>
<svg style="left:1489px;top:120px" width="13" height="13" viewBox="0 0 13 13"><circle cx="6.5" cy="6.5" r="6.3" fill="#c8c8c8"/><rect x="5.5" y="5.4" width="2" height="4.8" fill="#3c3c3c"/><circle cx="6.5" cy="3.4" r="1.15" fill="#3c3c3c"/></svg>
<span class="t" style="left:1507.3px;top:120.00px;font-size:15.5px;line-height:15.5px;color:#d2d2d2;letter-spacing:0.305px;">Inspector</span>
<svg style="left:1866px;top:119.5px" width="12" height="12" viewBox="0 0 12 12"><rect x="0.7" y="6" width="9.6" height="5.3" rx="0.8" fill="none" stroke="#d0d0d0" stroke-width="1.3"/><path d="M4.2,1.6C6.5,0 9.5,1.2 9.2,6" fill="none" stroke="#d0d0d0" stroke-width="1.3"/></svg>
<svg style="left:1891px;top:119px" width="4" height="14" viewBox="0 0 4 14"><circle cx="2" cy="2" r="1.55" fill="#d8d8d8"/><circle cx="2" cy="7" r="1.55" fill="#d8d8d8"/><circle cx="2" cy="12" r="1.55" fill="#d8d8d8"/></svg>
<svg style="left:21px;top:640px" width="14" height="13" viewBox="0 0 14 13"><rect x="0.6" y="0" width="12.6" height="13" rx="1" fill="#d4d4d4"/><path d="M2.2,3.6H11.6M2.2,6.7H11.6M2.2,9.8H11.6" stroke="#151515" stroke-width="1.5"/></svg>
<span class="t" style="left:40.1px;top:640.00px;font-size:15.5px;line-height:15.5px;color:#d2d2d2;letter-spacing:0.090px;">Console</span>
<svg style="left:145px;top:642px" width="18" height="10" viewBox="0 0 18 10"><rect x="0.3" y="0.3" width="17.4" height="9.4" rx="4.7" fill="#d0d0d0"/><path d="M3,5H7M5,3V7" stroke="#3c3c3c" stroke-width="1.3"/><circle cx="11.3" cy="5" r="1.1" fill="#3c3c3c"/><circle cx="14.3" cy="5" r="1.1" fill="#3c3c3c"/></svg>
<span class="t" style="left:166.2px;top:640.00px;font-size:15.5px;line-height:15.5px;color:#d2d2d2;letter-spacing:-0.302px;">Game</span>
<svg style="left:257px;top:639px" width="16" height="16" viewBox="0 0 16 16"><circle cx="8" cy="8" r="7.4" fill="#d0d0d0"/><path d="M8,3.2V8.4H12.5" stroke="#151515" stroke-width="1.7" fill="none"/></svg>
<span class="t" style="left:277px;top:640.00px;font-size:15.5px;line-height:15.5px;color:#d2d2d2;letter-spacing:0.175px;">Animation</span>
<svg style="left:969.5px;top:639px" width="4" height="14" viewBox="0 0 4 14"><circle cx="2" cy="2" r="1.55" fill="#d8d8d8"/><circle cx="2" cy="7" r="1.55" fill="#d8d8d8"/><circle cx="2" cy="12" r="1.55" fill="#d8d8d8"/></svg>
<span class="t" style="left:14.5px;top:667.00px;font-size:15.5px;line-height:15.5px;color:#d2d2d2;letter-spacing:-0.427px;">Game</span>
<svg style="left:107px;top:671px" width="9.5" height="5.5" viewBox="0 0 9.5 5.5"><polygon points="0,0 9.5,0 4.75,5.5" fill="#c4c4c4"/></svg>
<span class="t" style="left:134px;top:667.00px;font-size:15.5px;line-height:15.5px;color:#d2d2d2;letter-spacing:-0.127px;">Display 1</span>
<svg style="left:213.5px;top:671px" width="9.5" height="5.5" viewBox="0 0 9.5 5.5"><polygon points="0,0 9.5,0 4.75,5.5" fill="#c4c4c4"/></svg>
<span class="t" style="left:234px;top:667.00px;font-size:15.5px;line-height:15.5px;color:#d2d2d2;letter-spacing:-0.001px;">Full HD (1920x1080)</span>
<svg style="left:413.5px;top:671px" width="9.5" height="5.5" viewBox="0 0 9.5 5.5"><polygon points="0,0 9.5,0 4.75,5.5" fill="#c4c4c4"/></svg>
<span class="t" style="left:438px;top:667.00px;font-size:15.5px;line-height:15.5px;color:#d2d2d2;letter-spacing:-0.094px;">Scale</span>
<div style="left:491px;top:674px;width:66.5px;height:1.5px;background:#5e5e5e;"></div>
<div style="left:485px;top:668.5px;width:12px;height:12px;background:#999;border-radius:6px;"></div>
<span class="t" style="left:565.2px;top:667.00px;font-size:15.5px;line-height:15.5px;color:#d2d2d2;letter-spacing:-0.043px;">0.41x</span>
<span class="t" style="left:620.8px;top:667.00px;font-size:15.5px;line-height:15.5px;color:#d2d2d2;letter-spacing:0.091px;">Play Focused</span>
<svg style="left:738.3px;top:671px" width="9.5" height="5.5" viewBox="0 0 9.5 5.5"><polygon points="0,0 9.5,0 4.75,5.5" fill="#c4c4c4"/></svg>
<svg style="left:761px;top:664.5px" width="19" height="19" viewBox="0 0 20 20"><ellipse cx="10" cy="12" rx="5" ry="6.4" fill="#c4c4c4"/><circle cx="10" cy="5.2" r="3" fill="#c4c4c4"/><path d="M5.5,9L1.8,6.5M5,12.5H1.2M5.5,15.5L2,18.2M14.5,9L18.2,6.5M15,12.5H18.8M14.5,15.5L18,18.2M7.5,3L5.5,0.8M12.5,3L14.5,0.8" stroke="#c4c4c4" stroke-width="1.4" fill="none"/></svg>
<svg style="left:794px;top:666px" width="18" height="16" viewBox="0 0 18 16"><path d="M0.5,5H3.5L8,1V15L3.5,11H0.5Z" fill="#d0d0d0"/><path d="M10.5,5C11.8,6.5 11.8,9.5 10.5,11M13,2.5C16,5.5 16,10.5 13,13.5" stroke="#d0d0d0" stroke-width="1.5" fill="none"/></svg>
<svg style="left:826px;top:667px" width="19" height="14" viewBox="0 0 19 14"><rect x="0.7" y="0.7" width="17.6" height="12.6" rx="1" fill="none" stroke="#d0d0d0" stroke-width="1.3"/><path d="M3,4.2H16M3,7.2H16" stroke="#d0d0d0" stroke-width="1.6" stroke-dasharray="2 1.2"/><path d="M4.5,10.3H14.5" stroke="#d0d0d0" stroke-width="1.6"/></svg>
<span class="t" style="left:859.4px;top:667.00px;font-size:15.5px;line-height:15.5px;color:#d2d2d2;letter-spacing:0.136px;">Stats</span>
<span class="t" style="left:906.3px;top:667.00px;font-size:15.5px;line-height:15.5px;color:#d2d2d2;letter-spacing:-0.089px;">Gizmos</span>
<svg style="left:972.3px;top:671px" width="9.5" height="5.5" viewBox="0 0 9.5 5.5"><polygon points="0,0 9.5,0 4.75,5.5" fill="#c4c4c4"/></svg>
<div style="left:122px;top:661px;width:1px;height:26px;background:#2a2a2a;"></div>
<div style="left:229px;top:661px;width:1px;height:26px;background:#2a2a2a;"></div>
<div style="left:429px;top:661px;width:1px;height:26px;background:#2a2a2a;"></div>
<div style="left:616px;top:661px;width:1px;height:26px;background:#2a2a2a;"></div>
<div style="left:754px;top:661px;width:1px;height:26px;background:#2a2a2a;"></div>
<div style="left:786px;top:661px;width:1px;height:26px;background:#2a2a2a;"></div>
<div style="left:819px;top:661px;width:1px;height:26px;background:#2a2a2a;"></div>
<div style="left:851px;top:661px;width:1px;height:26px;background:#2a2a2a;"></div>
<div style="left:901px;top:661px;width:1px;height:26px;background:#2a2a2a;"></div>
<div style="left:966px;top:665px;width:1px;height:18px;background:#2a2a2a;"></div>
<div style="left:978px;top:700px;width:7.5px;height:393.5px;background:#4a4a4a;border-radius:4px;"></div>
<svg style="left:1003px;top:639.5px" width="16" height="13.5" viewBox="0 0 16 14"><path d="M0.5,1.6C0.5,1 1,0.5 1.6,0.5H6L7.6,2.6H14.4C15,2.6 15.5,3.1 15.5,3.7V12.4C15.5,13 15,13.5 14.4,13.5H1.6C1,13.5 0.5,13 0.5,12.4Z" fill="#c8c8c8"/></svg>
<span class="t" style="left:1023px;top:640.00px;font-size:15.5px;line-height:15.5px;color:#d2d2d2;letter-spacing:0.251px;">Project</span>
<svg style="left:1429px;top:639.5px" width="12" height="12" viewBox="0 0 12 12"><rect x="0.7" y="6" width="9.6" height="5.3" rx="0.8" fill="none" stroke="#d0d0d0" stroke-width="1.3"/><path d="M4.2,1.6C6.5,0 9.5,1.2 9.2,6" fill="none" stroke="#d0d0d0" stroke-width="1.3"/></svg>
<svg style="left:1454px;top:639px" width="4" height="14" viewBox="0 0 4 14"><circle cx="2" cy="2" r="1.55" fill="#d8d8d8"/><circle cx="2" cy="7" r="1.55" fill="#d8d8d8"/><circle cx="2" cy="12" r="1.55" fill="#d8d8d8"/></svg>
<svg style="left:999px;top:666px" width="16" height="16" viewBox="0 0 16 16"><path d="M8,0.5V15.5M0.5,8H15.5" stroke="#d0d0d0" stroke-width="1.7" fill="none"/></svg>
<svg style="left:1020px;top:671px" width="9.5" height="5.5" viewBox="0 0 9.5 5.5"><polygon points="0,0 9.5,0 4.75,5.5" fill="#c4c4c4"/></svg>
<div style="left:1047px;top:664.5px;width:242px;height:19px;background:#2a2a2a;border-radius:4px;border:1px solid #1f1f1f;"></div>
<div style="left:1268px;top:665.5px;width:20px;height:17px;background:#404040;border-radius:0 3px 3px 0;border-left:1px solid #242424;"></div>
<svg style="left:1053px;top:669px" width="10" height="10" viewBox="0 0 10 10"><circle cx="3.8" cy="3.8" r="2.7" fill="none" stroke="#b8b8b8" stroke-width="1.3"/><path d="M5.8,5.8L9.2,9.2" stroke="#b8b8b8" stroke-width="1.5"/></svg>
<svg style="left:1271.5px;top:667px" width="14" height="14" viewBox="0 0 14 14"><g fill="none" stroke="#b8b8b8" stroke-width="1.2"><path d="M3.2,7.5V2.2C3.2,1.6 3.6,1.2 4.2,1.2H11.8C12.4,1.2 12.8,1.6 12.8,2.2V9.8C12.8,10.4 12.4,10.8 11.8,10.8H6.5"/><rect x="0.8" y="8.2" width="5" height="5" rx="0.8"/><path d="M6,8L10.2,3.8M7,3.6H10.4V7"/></g></svg>
<div style="left:1293px;top:662px;width:1px;height:24px;background:#2c2c2c;"></div>
<div style="left:1326px;top:662px;width:1px;height:24px;background:#2c2c2c;"></div>
<div style="left:1357px;top:662px;width:1px;height:24px;background:#2c2c2c;"></div>
<div style="left:1390px;top:662px;width:1px;height:24px;background:#2c2c2c;"></div>
<div style="left:1423px;top:662px;width:1px;height:24px;background:#2c2c2c;"></div>
<svg style="left:1300px;top:666px" width="17" height="16" viewBox="0 0 17 16"><circle cx="4.5" cy="11" r="4" fill="#c8c8c8"/><rect x="3" y="0.8" width="6" height="5.2" fill="#c8c8c8"/><path d="M12,5L16.3,12.5H7.7Z" fill="#c8c8c8"/></svg>
<svg style="left:1333px;top:667px" width="15" height="14" viewBox="0 0 15 14"><path d="M0.8,8L8,0.8H14.2V7L7,14.2Z" fill="#c8c8c8" transform="scale(0.95)"/><circle cx="11" cy="3.6" r="1.2" fill="#3c3c3c"/></svg>
<svg style="left:1364px;top:666px" width="17" height="17" viewBox="0 0 17 17"><circle cx="8.5" cy="8.5" r="8" fill="#c8c8c8"/><rect x="7.4" y="3.6" width="2.2" height="6.4" fill="#3c3c3c"/><circle cx="8.5" cy="12.6" r="1.3" fill="#3c3c3c"/></svg>
<svg style="left:1399px;top:667px" width="15" height="15" viewBox="0 0 20 20"><polygon points="10.00,1.00 12.37,7.34 19.13,7.63 13.83,11.85 15.64,18.37 10.00,14.63 4.36,18.37 6.17,11.85 0.87,7.63 7.63,7.34" fill="#7a7a7a"/></svg>
<svg style="left:1430px;top:669px" width="18" height="11" viewBox="0 0 18 11"><path d="M0.8,5.5C4.5,0 13.5,0 17.2,5.5C13.5,11 4.5,11 0.8,5.5Z" fill="none" stroke="#6c6c6c" stroke-width="1.3"/><circle cx="9" cy="5.2" r="2.8" fill="#6c6c6c"/></svg>
<span class="t" style="left:1451px;top:667.00px;font-size:15.5px;line-height:15.5px;color:#bdbdbd;letter-spacing:-0.870px;">31</span>
<div style="left:991px;top:886px;width:261px;height:20px;background:#4d4d4d;"></div>
<svg style="left:996px;top:693px" width="11" height="9" viewBox="0 0 11 9"><polygon points="0.3,0.5 10.7,0.5 5.5,8.5" fill="#6e6e6e"/></svg>
<svg style="left:1014px;top:689px" width="15.5" height="15.5" viewBox="0 0 20 20"><polygon points="10.00,1.00 12.37,7.34 19.13,7.63 13.83,11.85 15.64,18.37 10.00,14.63 4.36,18.37 6.17,11.85 0.87,7.63 7.63,7.34" fill="#c8c8c8"/></svg>
<span class="t" style="left:1035px;top:688.00px;font-size:15.5px;line-height:15.5px;color:#dadada;letter-spacing:-0.046px;font-weight:bold;">Favorites</span>
<svg style="left:1030px;top:708px" width="16" height="16" viewBox="0 0 16 16"><circle cx="6.4" cy="6.4" r="5" fill="none" stroke="#c4c4c4" stroke-width="1.5"/><path d="M10,10L15,15" stroke="#c4c4c4" stroke-width="2"/></svg>
<span class="t" style="left:1050.7px;top:708.00px;font-size:15.5px;line-height:15.5px;color:#d2d2d2;letter-spacing:0.168px;">All Materials</span>
<svg style="left:1030px;top:728px" width="16" height="16" viewBox="0 0 16 16"><circle cx="6.4" cy="6.4" r="5" fill="none" stroke="#c4c4c4" stroke-width="1.5"/><path d="M10,10L15,15" stroke="#c4c4c4" stroke-width="2"/></svg>
<span class="t" style="left:1050.7px;top:728.00px;font-size:15.5px;line-height:15.5px;color:#d2d2d2;letter-spacing:0.180px;">All Models</span>
<svg style="left:1030px;top:748px" width="16" height="16" viewBox="0 0 16 16"><circle cx="6.4" cy="6.4" r="5" fill="none" stroke="#c4c4c4" stroke-width="1.5"/><path d="M10,10L15,15" stroke="#c4c4c4" stroke-width="2"/></svg>
<span class="t" style="left:1050.7px;top:748.00px;font-size:15.5px;line-height:15.5px;color:#d2d2d2;letter-spacing:0.141px;">All Prefabs</span>
<svg style="left:996px;top:792px" width="11" height="9" viewBox="0 0 11 9"><polygon points="0.3,0.5 10.7,0.5 5.5,8.5" fill="#6e6e6e"/></svg>
<svg style="left:1013px;top:788.5px" width="18" height="14" viewBox="0 0 18 14"><path d="M1,13V1.8C1,1.2 1.4,0.8 2,0.8H6L7.5,2.8H13.5C14.1,2.8 14.5,3.2 14.5,3.8V5" fill="none" stroke="#c8c8c8" stroke-width="1.4"/><path d="M3.6,5.4H17.2L14.4,13.3H0.8Z" fill="#c8c8c8"/></svg>
<span class="t" style="left:1035px;top:788.00px;font-size:15.5px;line-height:15.5px;color:#dadada;letter-spacing:0.027px;font-weight:bold;">Assets</span>
<svg style="left:1030px;top:808.5px" width="16" height="13.5" viewBox="0 0 16 14"><path d="M0.5,1.6C0.5,1 1,0.5 1.6,0.5H6L7.6,2.6H14.4C15,2.6 15.5,3.1 15.5,3.7V12.4C15.5,13 15,13.5 14.4,13.5H1.6C1,13.5 0.5,13 0.5,12.4Z" fill="#c8c8c8"/></svg>
<span class="t" style="left:1050.7px;top:808.00px;font-size:15.5px;line-height:15.5px;color:#d2d2d2;letter-spacing:0.138px;">Animacions</span>
<svg style="left:1030px;top:828.5px" width="16" height="13.5" viewBox="0 0 16 14"><path d="M0.5,1.6C0.5,1 1,0.5 1.6,0.5H6L7.6,2.6H14.4C15,2.6 15.5,3.1 15.5,3.7V12.4C15.5,13 15,13.5 14.4,13.5H1.6C1,13.5 0.5,13 0.5,12.4Z" fill="#c8c8c8"/></svg>
<span class="t" style="left:1050.7px;top:828.00px;font-size:15.5px;line-height:15.5px;color:#d2d2d2;letter-spacing:-0.748px;">BG</span>
<svg style="left:1030px;top:848.5px" width="16" height="13.5" viewBox="0 0 16 14"><path d="M0.5,1.6C0.5,1 1,0.5 1.6,0.5H6L7.6,2.6H14.4C15,2.6 15.5,3.1 15.5,3.7V12.4C15.5,13 15,13.5 14.4,13.5H1.6C1,13.5 0.5,13 0.5,12.4Z" fill="#c8c8c8"/></svg>
<span class="t" style="left:1050.7px;top:848.00px;font-size:15.5px;line-height:15.5px;color:#d2d2d2;letter-spacing:0.317px;">Object</span>
<svg style="left:1030px;top:868.5px" width="16" height="13.5" viewBox="0 0 16 14"><path d="M0.5,1.6C0.5,1 1,0.5 1.6,0.5H6L7.6,2.6H14.4C15,2.6 15.5,3.1 15.5,3.7V12.4C15.5,13 15,13.5 14.4,13.5H1.6C1,13.5 0.5,13 0.5,12.4Z" fill="#c8c8c8"/></svg>
<span class="t" style="left:1050.7px;top:868.00px;font-size:15.5px;line-height:15.5px;color:#d2d2d2;letter-spacing:0.045px;">Players</span>
<svg style="left:1015px;top:870px" width="9" height="10" viewBox="0 0 9 10"><polygon points="0,0 9,5.0 0,10" fill="#6e6e6e"/></svg>
<svg style="left:1030px;top:888.5px" width="16" height="13.5" viewBox="0 0 16 14"><path d="M0.5,1.6C0.5,1 1,0.5 1.6,0.5H6L7.6,2.6H14.4C15,2.6 15.5,3.1 15.5,3.7V12.4C15.5,13 15,13.5 14.4,13.5H1.6C1,13.5 0.5,13 0.5,12.4Z" fill="#c8c8c8"/></svg>
<span class="t" style="left:1050.7px;top:888.00px;font-size:15.5px;line-height:15.5px;color:#d2d2d2;letter-spacing:0.172px;">Prefab</span>
<svg style="left:1030px;top:908.5px" width="16" height="13.5" viewBox="0 0 16 14"><path d="M0.5,1.6C0.5,1 1,0.5 1.6,0.5H6L7.6,2.6H14.4C15,2.6 15.5,3.1 15.5,3.7V12.4C15.5,13 15,13.5 14.4,13.5H1.6C1,13.5 0.5,13 0.5,12.4Z" fill="#c8c8c8"/></svg>
<span class="t" style="left:1050.7px;top:908.00px;font-size:15.5px;line-height:15.5px;color:#d2d2d2;letter-spacing:0.017px;">Scenes</span>
<svg style="left:1030px;top:928.5px" width="16" height="13.5" viewBox="0 0 16 14"><path d="M0.5,1.6C0.5,1 1,0.5 1.6,0.5H6L7.6,2.6H14.4C15,2.6 15.5,3.1 15.5,3.7V12.4C15.5,13 15,13.5 14.4,13.5H1.6C1,13.5 0.5,13 0.5,12.4Z" fill="#c8c8c8"/></svg>
<span class="t" style="left:1050.7px;top:928.00px;font-size:15.5px;line-height:15.5px;color:#d2d2d2;letter-spacing:0.333px;">Scripts</span>
<svg style="left:1030px;top:948.5px" width="16" height="13.5" viewBox="0 0 16 14"><path d="M0.5,1.6C0.5,1 1,0.5 1.6,0.5H6L7.6,2.6H14.4C15,2.6 15.5,3.1 15.5,3.7V12.4C15.5,13 15,13.5 14.4,13.5H1.6C1,13.5 0.5,13 0.5,12.4Z" fill="#c8c8c8"/></svg>
<span class="t" style="left:1050.7px;top:948.00px;font-size:15.5px;line-height:15.5px;color:#d2d2d2;letter-spacing:0.349px;">Settings</span>
<svg style="left:1015px;top:950px" width="9" height="10" viewBox="0 0 9 10"><polygon points="0,0 9,5.0 0,10" fill="#6e6e6e"/></svg>
<svg style="left:1030px;top:968.5px" width="16" height="13.5" viewBox="0 0 16 14"><path d="M0.5,1.6C0.5,1 1,0.5 1.6,0.5H6L7.6,2.6H14.4C15,2.6 15.5,3.1 15.5,3.7V12.4C15.5,13 15,13.5 14.4,13.5H1.6C1,13.5 0.5,13 0.5,12.4Z" fill="#c8c8c8"/></svg>
<span class="t" style="left:1050.7px;top:968.00px;font-size:15.5px;line-height:15.5px;color:#d2d2d2;letter-spacing:0.270px;">Tiles</span>
<svg style="left:997px;top:990px" width="9" height="10" viewBox="0 0 9 10"><polygon points="0,0 9,5.0 0,10" fill="#6e6e6e"/></svg>
<svg style="left:1013px;top:988.5px" width="16" height="13.5" viewBox="0 0 16 14"><path d="M0.5,1.6C0.5,1 1,0.5 1.6,0.5H6L7.6,2.6H14.4C15,2.6 15.5,3.1 15.5,3.7V12.4C15.5,13 15,13.5 14.4,13.5H1.6C1,13.5 0.5,13 0.5,12.4Z" fill="#c8c8c8"/></svg>
<span class="t" style="left:1035.2px;top:988.00px;font-size:15.5px;line-height:15.5px;color:#dadada;letter-spacing:-0.066px;font-weight:bold;">Packages</span>
<div style="left:1252px;top:687px;width:1px;height:420px;background:#242424;"></div>
<div style="left:1253px;top:687px;width:220px;height:26px;background:#3e3e3e;"></div>
<span class="t" style="left:1258.4px;top:692.00px;font-size:15.5px;line-height:15.5px;color:#8c8c8c;letter-spacing:0.114px;">Assets</span>
<svg style="left:1314px;top:693px" width="9" height="13" viewBox="0 0 9 13"><path d="M1.5,1.5L7,6.5L1.5,11.5" stroke="#9a9a9a" stroke-width="1.5" fill="none"/></svg>
<span class="t" style="left:1328.3px;top:692.00px;font-size:15.5px;line-height:15.5px;color:#cfcfcf;letter-spacing:0.010px;font-weight:bold;">Prefab</span>
<svg style="left:1259px;top:719px" width="9" height="10" viewBox="0 0 9 10"><polygon points="0,0 9,5.0 0,10" fill="#6a6a6a"/></svg>
<div style="left:1273px;top:713.5px;width:20px;height:20px;background:#ffffff;border-radius:10px;"></div>
<span class="t" style="left:1295.3px;top:717.00px;font-size:15.5px;line-height:15.5px;color:#d2d2d2;letter-spacing:-0.012px;">Bullet</span>
<svg style="left:1273.5px;top:734.5px" width="18" height="19" viewBox="0 0 18 19"><polygon points="9,0.4 17.2,4.8 17.2,14.3 9,18.6 0.8,14.3 0.8,4.8" fill="#70d2fb"/><path d="M0.8,4.8L9,9.2L17.2,4.8M9,9.2V18.6" stroke="#2f4a5a" stroke-width="1.1" fill="none"/></svg>
<span class="t" style="left:1295.3px;top:737.00px;font-size:15.5px;line-height:15.5px;color:#d2d2d2;letter-spacing:0.267px;">LeftBullet</span>
<svg style="left:1273.5px;top:754.5px" width="18" height="19" viewBox="0 0 18 19"><polygon points="9,0.4 17.2,4.8 17.2,14.3 9,18.6 0.8,14.3 0.8,4.8" fill="#70d2fb"/><path d="M0.8,4.8L9,9.2L17.2,4.8M9,9.2V18.6" stroke="#2f4a5a" stroke-width="1.1" fill="none"/></svg>
<span class="t" style="left:1295.3px;top:757.00px;font-size:15.5px;line-height:15.5px;color:#d2d2d2;letter-spacing:0.068px;">RightBullet</span>
<div style="left:1253px;top:1081px;width:220px;height:26px;background:#3e3e3e;"></div>
<div style="left:1390px;top:1093px;width:63px;height:1.5px;background:#5e5e5e;"></div>
<div style="left:1383.5px;top:1087.5px;width:12.5px;height:12.5px;background:#a8a8a8;border-radius:7px;"></div>
<div style="left:1811px;top:1109px;width:1px;height:22px;background:#242424;"></div>
<div style="left:1844px;top:1109px;width:1px;height:22px;background:#242424;"></div>
<div style="left:1876px;top:1109px;width:1px;height:22px;background:#242424;"></div>
<svg style="left:1819px;top:1112.5px" width="19" height="19" viewBox="0 0 20 20"><ellipse cx="10" cy="12" rx="5" ry="6.4" fill="#c4c4c4"/><circle cx="10" cy="5.2" r="3" fill="#c4c4c4"/><path d="M5.5,9L1.8,6.5M5,12.5H1.2M5.5,15.5L2,18.2M14.5,9L18.2,6.5M15,12.5H18.8M14.5,15.5L18,18.2M7.5,3L5.5,0.8M12.5,3L14.5,0.8" stroke="#c4c4c4" stroke-width="1.4" fill="none"/></svg>
<svg style="left:1819px;top:1112px" width="20" height="20" viewBox="0 0 20 20"><path d="M2,1.5L18,19" stroke="#151515" stroke-width="3.2"/><path d="M2.6,1L18.6,18.5" stroke="#c4c4c4" stroke-width="1.3"/></svg>
<svg style="left:1851px;top:1113px" width="19" height="19" viewBox="0 0 19 19"><g fill="#c4c4c4"><ellipse cx="9" cy="4" rx="7.5" ry="3.4"/><path d="M1.5,6.5C3,9.5 15,9.5 16.5,6.5V9.5C15,12.5 3,12.5 1.5,9.5Z"/><path d="M1.5,11.8C3,14.8 15,14.8 16.5,11.8V14.5C15,17.8 3,17.8 1.5,14.5Z"/></g><path d="M3,2L17,18.5" stroke="#151515" stroke-width="3"/><path d="M3.6,1.5L17.6,18" stroke="#c4c4c4" stroke-width="1.3"/></svg>
<svg style="left:1883px;top:1112px" width="19" height="19" viewBox="0 0 19 19"><circle cx="9.5" cy="9.5" r="8.3" fill="none" stroke="#c4c4c4" stroke-width="1.4"/><path d="M5.5,9.8L8.4,12.6L13.6,6.8" stroke="#c4c4c4" stroke-width="1.9" fill="none"/></svg>
<svg style="left:0;top:0;pointer-events:none" width="1919" height="1137"><path d="M1075,306L1272.5,730.2" stroke="#f4f4f4" stroke-width="1.2" fill="none"/><polygon points="1278,742 1269.7,731.5 1275.3,728.9" fill="#f4f4f4"/><path d="M1057.8,335.4L1268.8,750.9" stroke="#f4f4f4" stroke-width="1.2" fill="none"/><polygon points="1274.7,762.5 1266.0,752.3 1271.6,749.5" fill="#f4f4f4"/><path d="M1624.7,470L1391.9,685.9" stroke="#f4f4f4" stroke-width="1.2" fill="none"/><polygon points="1382.4,694.7 1389.8,683.6 1394.0,688.1" fill="#f4f4f4"/></svg>
</div></div>
</body></html>
